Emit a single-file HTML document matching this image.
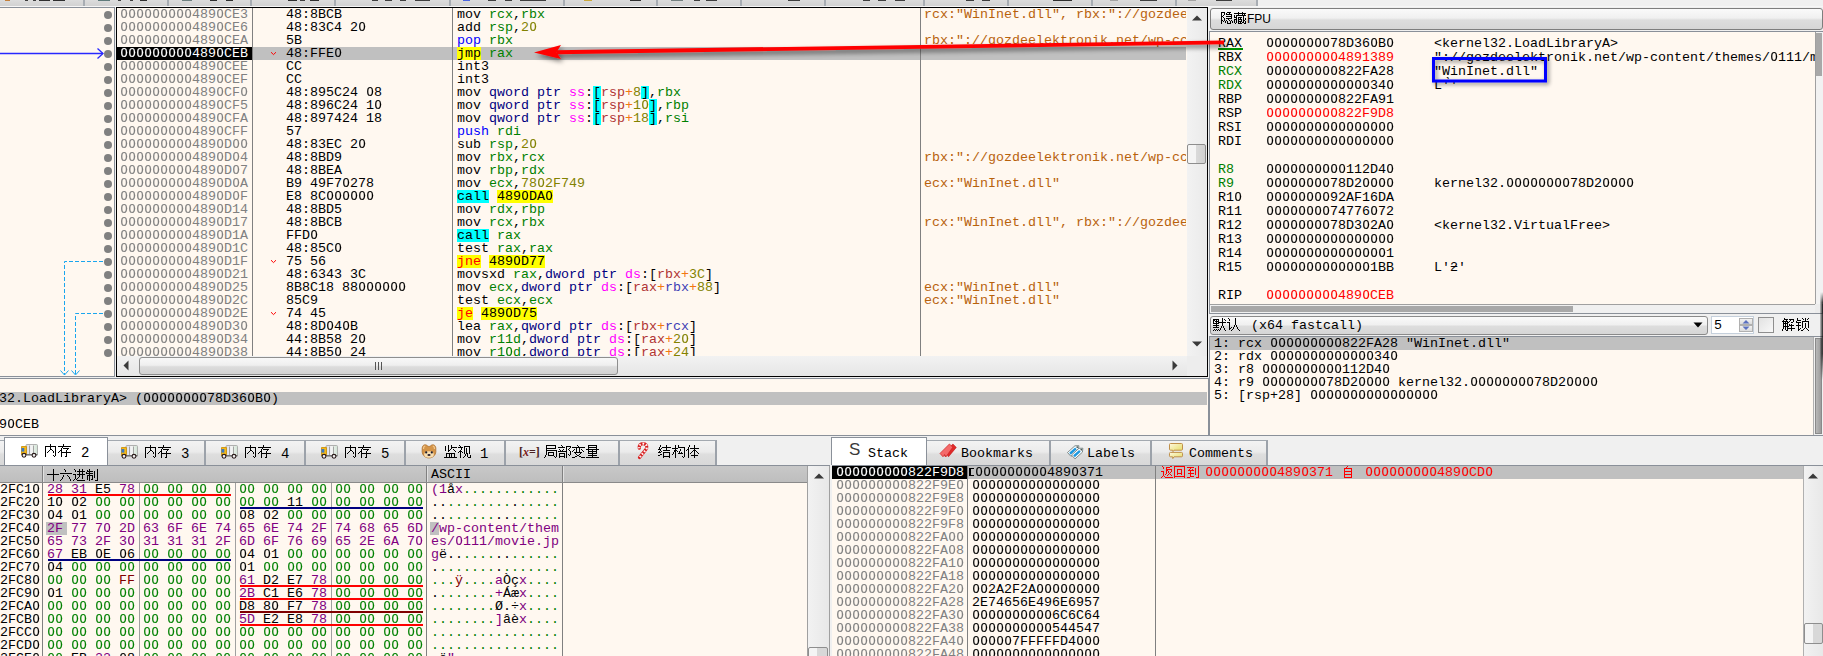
<!DOCTYPE html><html><head><meta charset="utf-8"><style>
*{margin:0;padding:0;box-sizing:border-box}
html,body{width:1823px;height:656px;overflow:hidden}
body{position:relative;background:#F0F0F0;font-family:"Liberation Mono",monospace;font-size:13.333px;line-height:13px;color:#000}
.a{position:absolute}
.t{position:absolute;white-space:pre;height:13px}
.z{display:inline-block;width:8px;transform:scaleX(.9);-webkit-text-stroke:0.15px currentColor;font-weight:normal}
</style></head><body><div class="a" style="left:0px;top:0px;width:1256px;height:6px;background:linear-gradient(#DCDCDC,#D2D2D2)"></div>
<div class="a" style="left:0px;top:6px;width:1823px;height:1px;background:#F6F6F6"></div>
<div class="a" style="left:83px;top:0px;width:2px;height:6px;background:#A8ADB3"></div>
<div class="a" style="left:167px;top:0px;width:2px;height:6px;background:#A8ADB3"></div>
<div class="a" style="left:250px;top:0px;width:2px;height:6px;background:#A8ADB3"></div>
<div class="a" style="left:334px;top:0px;width:2px;height:6px;background:#A8ADB3"></div>
<div class="a" style="left:449px;top:0px;width:2px;height:6px;background:#A8ADB3"></div>
<div class="a" style="left:563px;top:0px;width:2px;height:6px;background:#A8ADB3"></div>
<div class="a" style="left:656px;top:0px;width:2px;height:6px;background:#A8ADB3"></div>
<div class="a" style="left:740px;top:0px;width:2px;height:6px;background:#A8ADB3"></div>
<div class="a" style="left:824px;top:0px;width:2px;height:6px;background:#A8ADB3"></div>
<div class="a" style="left:923px;top:0px;width:2px;height:6px;background:#A8ADB3"></div>
<div class="a" style="left:1007px;top:0px;width:2px;height:6px;background:#A8ADB3"></div>
<div class="a" style="left:1091px;top:0px;width:2px;height:6px;background:#A8ADB3"></div>
<div class="a" style="left:1175px;top:0px;width:2px;height:6px;background:#A8ADB3"></div>
<div class="a" style="left:1256px;top:0px;width:2px;height:6px;background:#A8ADB3"></div>
<div class="a" style="left:5px;top:0px;width:5px;height:1px;background:#C07020;opacity:.85"></div>
<div class="a" style="left:25px;top:0px;width:3px;height:1px;background:#222;opacity:.85"></div>
<div class="a" style="left:33px;top:0px;width:3px;height:1px;background:#222;opacity:.85"></div>
<div class="a" style="left:39px;top:0px;width:11px;height:1px;background:#111;opacity:.85"></div>
<div class="a" style="left:53px;top:0px;width:12px;height:1px;background:#111;opacity:.85"></div>
<div class="a" style="left:98px;top:0px;width:12px;height:1px;background:#4A6A6A;opacity:.85"></div>
<div class="a" style="left:118px;top:0px;width:3px;height:1px;background:#222;opacity:.85"></div>
<div class="a" style="left:130px;top:0px;width:3px;height:1px;background:#222;opacity:.85"></div>
<div class="a" style="left:140px;top:0px;width:7px;height:1px;background:#111;opacity:.85"></div>
<div class="a" style="left:182px;top:0px;width:10px;height:1px;background:#5A7070;opacity:.85"></div>
<div class="a" style="left:210px;top:0px;width:7px;height:1px;background:#111;opacity:.85"></div>
<div class="a" style="left:226px;top:0px;width:7px;height:1px;background:#111;opacity:.85"></div>
<div class="a" style="left:288px;top:0px;width:9px;height:1px;background:#111;opacity:.85"></div>
<div class="a" style="left:300px;top:0px;width:5px;height:1px;background:#222;opacity:.85"></div>
<div class="a" style="left:310px;top:0px;width:9px;height:1px;background:#111;opacity:.85"></div>
<div class="a" style="left:372px;top:0px;width:6px;height:1px;background:#222;opacity:.85"></div>
<div class="a" style="left:385px;top:0px;width:7px;height:1px;background:#222;opacity:.85"></div>
<div class="a" style="left:400px;top:0px;width:6px;height:1px;background:#222;opacity:.85"></div>
<div class="a" style="left:415px;top:0px;width:15px;height:1px;background:#222;opacity:.85"></div>
<div class="a" style="left:463px;top:0px;width:7px;height:1px;background:#3050E0;opacity:.85"></div>
<div class="a" style="left:488px;top:0px;width:8px;height:1px;background:#222;opacity:.85"></div>
<div class="a" style="left:505px;top:0px;width:7px;height:1px;background:#222;opacity:.85"></div>
<div class="a" style="left:520px;top:0px;width:26px;height:1px;background:#222;opacity:.85"></div>
<div class="a" style="left:584px;top:0px;width:8px;height:1px;background:#C8A020;opacity:.85"></div>
<div class="a" style="left:630px;top:0px;width:11px;height:1px;background:#111;opacity:.85"></div>
<div class="a" style="left:671px;top:0px;width:12px;height:1px;background:#607070;opacity:.85"></div>
<div class="a" style="left:694px;top:0px;width:6px;height:1px;background:#222;opacity:.85"></div>
<div class="a" style="left:706px;top:0px;width:11px;height:1px;background:#222;opacity:.85"></div>
<div class="a" style="left:788px;top:0px;width:12px;height:1px;background:#222;opacity:.85"></div>
<div class="a" style="left:863px;top:0px;width:7px;height:1px;background:#222;opacity:.85"></div>
<div class="a" style="left:878px;top:0px;width:8px;height:1px;background:#222;opacity:.85"></div>
<div class="a" style="left:895px;top:0px;width:10px;height:1px;background:#222;opacity:.85"></div>
<div class="a" style="left:966px;top:0px;width:8px;height:1px;background:#222;opacity:.85"></div>
<div class="a" style="left:982px;top:0px;width:8px;height:1px;background:#222;opacity:.85"></div>
<div class="a" style="left:1053px;top:0px;width:19px;height:1px;background:#111;opacity:.85"></div>
<div class="a" style="left:1110px;top:0px;width:8px;height:1px;background:#999;opacity:.85"></div>
<div class="a" style="left:1140px;top:0px;width:17px;height:1px;background:#222;opacity:.85"></div>
<div class="a" style="left:1188px;top:0px;width:8px;height:1px;background:#999;opacity:.85"></div>
<div class="a" style="left:1216px;top:0px;width:16px;height:1px;background:#222;opacity:.85"></div>
<div class="a" style="left:0px;top:7px;width:115px;height:370px;background:#FFF8F0;border-top:1px solid #8A9099;border-right:1px solid #8A9099;border-bottom:1px solid #8A9099"></div>
<div class="a" style="left:116px;top:7px;width:1092px;height:370px;background:#FFF8F0;border:1px solid #000"></div>
<div class="a" style="left:104px;top:10.5px;width:8px;height:8px;border-radius:50%;background:#808080"></div>
<div class="a" style="left:104px;top:23.5px;width:8px;height:8px;border-radius:50%;background:#808080"></div>
<div class="a" style="left:104px;top:36.5px;width:8px;height:8px;border-radius:50%;background:#808080"></div>
<div class="a" style="left:104px;top:49.5px;width:8px;height:8px;border-radius:50%;background:#808080"></div>
<div class="a" style="left:104px;top:62.5px;width:8px;height:8px;border-radius:50%;background:#808080"></div>
<div class="a" style="left:104px;top:75.5px;width:8px;height:8px;border-radius:50%;background:#808080"></div>
<div class="a" style="left:104px;top:88.5px;width:8px;height:8px;border-radius:50%;background:#808080"></div>
<div class="a" style="left:104px;top:101.5px;width:8px;height:8px;border-radius:50%;background:#808080"></div>
<div class="a" style="left:104px;top:114.5px;width:8px;height:8px;border-radius:50%;background:#808080"></div>
<div class="a" style="left:104px;top:127.5px;width:8px;height:8px;border-radius:50%;background:#808080"></div>
<div class="a" style="left:104px;top:140.5px;width:8px;height:8px;border-radius:50%;background:#808080"></div>
<div class="a" style="left:104px;top:153.5px;width:8px;height:8px;border-radius:50%;background:#808080"></div>
<div class="a" style="left:104px;top:166.5px;width:8px;height:8px;border-radius:50%;background:#808080"></div>
<div class="a" style="left:104px;top:179.5px;width:8px;height:8px;border-radius:50%;background:#808080"></div>
<div class="a" style="left:104px;top:192.5px;width:8px;height:8px;border-radius:50%;background:#808080"></div>
<div class="a" style="left:104px;top:205.5px;width:8px;height:8px;border-radius:50%;background:#808080"></div>
<div class="a" style="left:104px;top:218.5px;width:8px;height:8px;border-radius:50%;background:#808080"></div>
<div class="a" style="left:104px;top:231.5px;width:8px;height:8px;border-radius:50%;background:#808080"></div>
<div class="a" style="left:104px;top:244.5px;width:8px;height:8px;border-radius:50%;background:#808080"></div>
<div class="a" style="left:104px;top:257.5px;width:8px;height:8px;border-radius:50%;background:#808080"></div>
<div class="a" style="left:104px;top:270.5px;width:8px;height:8px;border-radius:50%;background:#808080"></div>
<div class="a" style="left:104px;top:283.5px;width:8px;height:8px;border-radius:50%;background:#808080"></div>
<div class="a" style="left:104px;top:296.5px;width:8px;height:8px;border-radius:50%;background:#808080"></div>
<div class="a" style="left:104px;top:309.5px;width:8px;height:8px;border-radius:50%;background:#808080"></div>
<div class="a" style="left:104px;top:322.5px;width:8px;height:8px;border-radius:50%;background:#808080"></div>
<div class="a" style="left:104px;top:335.5px;width:8px;height:8px;border-radius:50%;background:#808080"></div>
<div class="a" style="left:104px;top:348.5px;width:8px;height:8px;border-radius:50%;background:#808080"></div>
<svg class="a" style="left:0;top:0" width="116" height="377">
<path d="M0 53.5H103" stroke="#2828FF" stroke-width="1.3" fill="none"/>
<path d="M97.5 48.5L103 53.5L97.5 58.5" stroke="#2828FF" stroke-width="1.3" fill="none"/>
<path d="M103 261.5H64.5V375" stroke="#1AA6EE" stroke-width="1" stroke-dasharray="4 2" fill="none"/>
<path d="M103 313.5H75.5V375" stroke="#1AA6EE" stroke-width="1" stroke-dasharray="4 2" fill="none"/>
<path d="M60.5 370.5L64.5 375L68.5 370.5M71.5 370.5L75.5 375L79.5 370.5" stroke="#1AA6EE" stroke-width="1" fill="none"/>
</svg>
<div class="a" style="left:117px;top:8px;width:1070px;height:348px;overflow:hidden">
<div class="a" style="left:0px;top:39px;width:1069px;height:13px;background:#C0C0C0"></div>
<div class="a" style="left:0px;top:39px;width:135px;height:13px;background:#000"></div>
<div class="a" style="left:135px;top:0px;width:1px;height:348px;background:#808080"></div>
<div class="a" style="left:335px;top:0px;width:1px;height:348px;background:#808080"></div>
<div class="a" style="left:803px;top:0px;width:1px;height:348px;background:#808080"></div>
<div class="t" style="left:3px;top:0px;"><span style="color:#808080;"><b class="z">O</b><b class="z">O</b><b class="z">O</b><b class="z">O</b><b class="z">O</b><b class="z">O</b><b class="z">O</b><b class="z">O</b><b class="z">O</b>489<b class="z">O</b>CE3</span></div>
<div class="t" style="left:169px;top:0px;"><span style="color:#000000;">48:8BCB</span></div>
<div class="t" style="left:340px;top:0px;"><span style="color:#000000;">mov</span> <span style="color:#008000;">rcx</span><span style="color:#000000;">,</span><span style="color:#008000;">rbx</span></div>
<div class="t" style="left:807px;top:0px;width:262px;overflow:hidden"><span style="color:#B8620C;">rcx:"WinInet.dll", rbx:"://gozdee</span></div>
<div class="t" style="left:3px;top:13px;"><span style="color:#808080;"><b class="z">O</b><b class="z">O</b><b class="z">O</b><b class="z">O</b><b class="z">O</b><b class="z">O</b><b class="z">O</b><b class="z">O</b><b class="z">O</b>489<b class="z">O</b>CE6</span></div>
<div class="t" style="left:169px;top:13px;"><span style="color:#000000;">48:83C4 2<b class="z">O</b></span></div>
<div class="t" style="left:340px;top:13px;"><span style="color:#000000;">add</span> <span style="color:#008000;">rsp</span><span style="color:#000000;">,</span><span style="color:#828200;">2<b class="z">O</b></span></div>
<div class="t" style="left:3px;top:26px;"><span style="color:#808080;"><b class="z">O</b><b class="z">O</b><b class="z">O</b><b class="z">O</b><b class="z">O</b><b class="z">O</b><b class="z">O</b><b class="z">O</b><b class="z">O</b>489<b class="z">O</b>CEA</span></div>
<div class="t" style="left:169px;top:26px;"><span style="color:#000000;">5B</span></div>
<div class="t" style="left:340px;top:26px;"><span style="color:#0000FF;">pop</span> <span style="color:#008000;">rbx</span></div>
<div class="t" style="left:807px;top:26px;width:262px;overflow:hidden"><span style="color:#B8620C;">rbx:"://gozdeelektronik.net/wp-cc</span></div>
<div class="t" style="left:3px;top:39px;"><span style="color:#FFFFFF;"><b class="z">O</b><b class="z">O</b><b class="z">O</b><b class="z">O</b><b class="z">O</b><b class="z">O</b><b class="z">O</b><b class="z">O</b><b class="z">O</b>489<b class="z">O</b>CEB</span></div>
<div class="t" style="left:169px;top:39px;"><span style="color:#000000;">48:FFE<b class="z">O</b></span></div>
<div class="t" style="left:340px;top:39px;"><span style="color:#000000;background:#FFFF00;display:inline-block;height:13px;vertical-align:top;">jmp</span> <span style="color:#008000;">rax</span></div>
<div class="t" style="left:3px;top:52px;"><span style="color:#808080;"><b class="z">O</b><b class="z">O</b><b class="z">O</b><b class="z">O</b><b class="z">O</b><b class="z">O</b><b class="z">O</b><b class="z">O</b><b class="z">O</b>489<b class="z">O</b>CEE</span></div>
<div class="t" style="left:169px;top:52px;"><span style="color:#000000;">CC</span></div>
<div class="t" style="left:340px;top:52px;"><span style="color:#000000;">int3</span></div>
<div class="t" style="left:3px;top:65px;"><span style="color:#808080;"><b class="z">O</b><b class="z">O</b><b class="z">O</b><b class="z">O</b><b class="z">O</b><b class="z">O</b><b class="z">O</b><b class="z">O</b><b class="z">O</b>489<b class="z">O</b>CEF</span></div>
<div class="t" style="left:169px;top:65px;"><span style="color:#000000;">CC</span></div>
<div class="t" style="left:340px;top:65px;"><span style="color:#000000;">int3</span></div>
<div class="t" style="left:3px;top:78px;"><span style="color:#808080;"><b class="z">O</b><b class="z">O</b><b class="z">O</b><b class="z">O</b><b class="z">O</b><b class="z">O</b><b class="z">O</b><b class="z">O</b><b class="z">O</b>489<b class="z">O</b>CF<b class="z">O</b></span></div>
<div class="t" style="left:169px;top:78px;"><span style="color:#000000;">48:895C24 <b class="z">O</b>8</span></div>
<div class="t" style="left:340px;top:78px;"><span style="color:#000000;">mov</span> <span style="color:#000080;">qword ptr</span> <span style="color:#FF00FF;">ss</span><span style="color:#000000;">:</span><span style="color:#000000;background:#00FFFF;display:inline-block;height:13px;vertical-align:top;">[</span><span style="color:#B03434;">rsp</span><span style="color:#F27711;">+</span><span style="color:#828200;">8</span><span style="color:#000000;background:#00FFFF;display:inline-block;height:13px;vertical-align:top;">]</span><span style="color:#000000;">,</span><span style="color:#008000;">rbx</span></div>
<div class="t" style="left:3px;top:91px;"><span style="color:#808080;"><b class="z">O</b><b class="z">O</b><b class="z">O</b><b class="z">O</b><b class="z">O</b><b class="z">O</b><b class="z">O</b><b class="z">O</b><b class="z">O</b>489<b class="z">O</b>CF5</span></div>
<div class="t" style="left:169px;top:91px;"><span style="color:#000000;">48:896C24 1<b class="z">O</b></span></div>
<div class="t" style="left:340px;top:91px;"><span style="color:#000000;">mov</span> <span style="color:#000080;">qword ptr</span> <span style="color:#FF00FF;">ss</span><span style="color:#000000;">:</span><span style="color:#000000;background:#00FFFF;display:inline-block;height:13px;vertical-align:top;">[</span><span style="color:#B03434;">rsp</span><span style="color:#F27711;">+</span><span style="color:#828200;">1<b class="z">O</b></span><span style="color:#000000;background:#00FFFF;display:inline-block;height:13px;vertical-align:top;">]</span><span style="color:#000000;">,</span><span style="color:#008000;">rbp</span></div>
<div class="t" style="left:3px;top:104px;"><span style="color:#808080;"><b class="z">O</b><b class="z">O</b><b class="z">O</b><b class="z">O</b><b class="z">O</b><b class="z">O</b><b class="z">O</b><b class="z">O</b><b class="z">O</b>489<b class="z">O</b>CFA</span></div>
<div class="t" style="left:169px;top:104px;"><span style="color:#000000;">48:897424 18</span></div>
<div class="t" style="left:340px;top:104px;"><span style="color:#000000;">mov</span> <span style="color:#000080;">qword ptr</span> <span style="color:#FF00FF;">ss</span><span style="color:#000000;">:</span><span style="color:#000000;background:#00FFFF;display:inline-block;height:13px;vertical-align:top;">[</span><span style="color:#B03434;">rsp</span><span style="color:#F27711;">+</span><span style="color:#828200;">18</span><span style="color:#000000;background:#00FFFF;display:inline-block;height:13px;vertical-align:top;">]</span><span style="color:#000000;">,</span><span style="color:#008000;">rsi</span></div>
<div class="t" style="left:3px;top:117px;"><span style="color:#808080;"><b class="z">O</b><b class="z">O</b><b class="z">O</b><b class="z">O</b><b class="z">O</b><b class="z">O</b><b class="z">O</b><b class="z">O</b><b class="z">O</b>489<b class="z">O</b>CFF</span></div>
<div class="t" style="left:169px;top:117px;"><span style="color:#000000;">57</span></div>
<div class="t" style="left:340px;top:117px;"><span style="color:#0000FF;">push</span> <span style="color:#008000;">rdi</span></div>
<div class="t" style="left:3px;top:130px;"><span style="color:#808080;"><b class="z">O</b><b class="z">O</b><b class="z">O</b><b class="z">O</b><b class="z">O</b><b class="z">O</b><b class="z">O</b><b class="z">O</b><b class="z">O</b>489<b class="z">O</b>D<b class="z">O</b><b class="z">O</b></span></div>
<div class="t" style="left:169px;top:130px;"><span style="color:#000000;">48:83EC 2<b class="z">O</b></span></div>
<div class="t" style="left:340px;top:130px;"><span style="color:#000000;">sub</span> <span style="color:#008000;">rsp</span><span style="color:#000000;">,</span><span style="color:#828200;">2<b class="z">O</b></span></div>
<div class="t" style="left:3px;top:143px;"><span style="color:#808080;"><b class="z">O</b><b class="z">O</b><b class="z">O</b><b class="z">O</b><b class="z">O</b><b class="z">O</b><b class="z">O</b><b class="z">O</b><b class="z">O</b>489<b class="z">O</b>D<b class="z">O</b>4</span></div>
<div class="t" style="left:169px;top:143px;"><span style="color:#000000;">48:8BD9</span></div>
<div class="t" style="left:340px;top:143px;"><span style="color:#000000;">mov</span> <span style="color:#008000;">rbx</span><span style="color:#000000;">,</span><span style="color:#008000;">rcx</span></div>
<div class="t" style="left:807px;top:143px;width:262px;overflow:hidden"><span style="color:#B8620C;">rbx:"://gozdeelektronik.net/wp-cc</span></div>
<div class="t" style="left:3px;top:156px;"><span style="color:#808080;"><b class="z">O</b><b class="z">O</b><b class="z">O</b><b class="z">O</b><b class="z">O</b><b class="z">O</b><b class="z">O</b><b class="z">O</b><b class="z">O</b>489<b class="z">O</b>D<b class="z">O</b>7</span></div>
<div class="t" style="left:169px;top:156px;"><span style="color:#000000;">48:8BEA</span></div>
<div class="t" style="left:340px;top:156px;"><span style="color:#000000;">mov</span> <span style="color:#008000;">rbp</span><span style="color:#000000;">,</span><span style="color:#008000;">rdx</span></div>
<div class="t" style="left:3px;top:169px;"><span style="color:#808080;"><b class="z">O</b><b class="z">O</b><b class="z">O</b><b class="z">O</b><b class="z">O</b><b class="z">O</b><b class="z">O</b><b class="z">O</b><b class="z">O</b>489<b class="z">O</b>D<b class="z">O</b>A</span></div>
<div class="t" style="left:169px;top:169px;"><span style="color:#000000;">B9 49F7<b class="z">O</b>278</span></div>
<div class="t" style="left:340px;top:169px;"><span style="color:#000000;">mov</span> <span style="color:#008000;">ecx</span><span style="color:#000000;">,</span><span style="color:#828200;">78<b class="z">O</b>2F749</span></div>
<div class="t" style="left:807px;top:169px;width:262px;overflow:hidden"><span style="color:#B8620C;">ecx:"WinInet.dll"</span></div>
<div class="t" style="left:3px;top:182px;"><span style="color:#808080;"><b class="z">O</b><b class="z">O</b><b class="z">O</b><b class="z">O</b><b class="z">O</b><b class="z">O</b><b class="z">O</b><b class="z">O</b><b class="z">O</b>489<b class="z">O</b>D<b class="z">O</b>F</span></div>
<div class="t" style="left:169px;top:182px;"><span style="color:#000000;">E8 8C<b class="z">O</b><b class="z">O</b><b class="z">O</b><b class="z">O</b><b class="z">O</b><b class="z">O</b></span></div>
<div class="t" style="left:340px;top:182px;"><span style="color:#000000;background:#00FFFF;display:inline-block;height:13px;vertical-align:top;">call</span> <span style="color:#000000;background:#FFFF00;display:inline-block;height:13px;vertical-align:top;">489<b class="z">O</b>DA<b class="z">O</b></span></div>
<div class="t" style="left:3px;top:195px;"><span style="color:#808080;"><b class="z">O</b><b class="z">O</b><b class="z">O</b><b class="z">O</b><b class="z">O</b><b class="z">O</b><b class="z">O</b><b class="z">O</b><b class="z">O</b>489<b class="z">O</b>D14</span></div>
<div class="t" style="left:169px;top:195px;"><span style="color:#000000;">48:8BD5</span></div>
<div class="t" style="left:340px;top:195px;"><span style="color:#000000;">mov</span> <span style="color:#008000;">rdx</span><span style="color:#000000;">,</span><span style="color:#008000;">rbp</span></div>
<div class="t" style="left:3px;top:208px;"><span style="color:#808080;"><b class="z">O</b><b class="z">O</b><b class="z">O</b><b class="z">O</b><b class="z">O</b><b class="z">O</b><b class="z">O</b><b class="z">O</b><b class="z">O</b>489<b class="z">O</b>D17</span></div>
<div class="t" style="left:169px;top:208px;"><span style="color:#000000;">48:8BCB</span></div>
<div class="t" style="left:340px;top:208px;"><span style="color:#000000;">mov</span> <span style="color:#008000;">rcx</span><span style="color:#000000;">,</span><span style="color:#008000;">rbx</span></div>
<div class="t" style="left:807px;top:208px;width:262px;overflow:hidden"><span style="color:#B8620C;">rcx:"WinInet.dll", rbx:"://gozdee</span></div>
<div class="t" style="left:3px;top:221px;"><span style="color:#808080;"><b class="z">O</b><b class="z">O</b><b class="z">O</b><b class="z">O</b><b class="z">O</b><b class="z">O</b><b class="z">O</b><b class="z">O</b><b class="z">O</b>489<b class="z">O</b>D1A</span></div>
<div class="t" style="left:169px;top:221px;"><span style="color:#000000;">FFD<b class="z">O</b></span></div>
<div class="t" style="left:340px;top:221px;"><span style="color:#000000;background:#00FFFF;display:inline-block;height:13px;vertical-align:top;">call</span> <span style="color:#008000;">rax</span></div>
<div class="t" style="left:3px;top:234px;"><span style="color:#808080;"><b class="z">O</b><b class="z">O</b><b class="z">O</b><b class="z">O</b><b class="z">O</b><b class="z">O</b><b class="z">O</b><b class="z">O</b><b class="z">O</b>489<b class="z">O</b>D1C</span></div>
<div class="t" style="left:169px;top:234px;"><span style="color:#000000;">48:85C<b class="z">O</b></span></div>
<div class="t" style="left:340px;top:234px;"><span style="color:#000000;">test</span> <span style="color:#008000;">rax</span><span style="color:#000000;">,</span><span style="color:#008000;">rax</span></div>
<div class="t" style="left:3px;top:247px;"><span style="color:#808080;"><b class="z">O</b><b class="z">O</b><b class="z">O</b><b class="z">O</b><b class="z">O</b><b class="z">O</b><b class="z">O</b><b class="z">O</b><b class="z">O</b>489<b class="z">O</b>D1F</span></div>
<div class="t" style="left:169px;top:247px;"><span style="color:#000000;">75 56</span></div>
<div class="t" style="left:340px;top:247px;"><span style="color:#FF0000;background:#FFFF00;display:inline-block;height:13px;vertical-align:top;">jne</span> <span style="color:#000000;background:#FFFF00;display:inline-block;height:13px;vertical-align:top;">489<b class="z">O</b>D77</span></div>
<div class="t" style="left:3px;top:260px;"><span style="color:#808080;"><b class="z">O</b><b class="z">O</b><b class="z">O</b><b class="z">O</b><b class="z">O</b><b class="z">O</b><b class="z">O</b><b class="z">O</b><b class="z">O</b>489<b class="z">O</b>D21</span></div>
<div class="t" style="left:169px;top:260px;"><span style="color:#000000;">48:6343 3C</span></div>
<div class="t" style="left:340px;top:260px;"><span style="color:#000000;">movsxd</span> <span style="color:#008000;">rax</span><span style="color:#000000;">,</span><span style="color:#000080;">dword ptr</span> <span style="color:#FF00FF;">ds</span><span style="color:#000000;">:</span><span style="color:#000000;">[</span><span style="color:#B03434;">rbx</span><span style="color:#F27711;">+</span><span style="color:#828200;">3C</span><span style="color:#000000;">]</span></div>
<div class="t" style="left:3px;top:273px;"><span style="color:#808080;"><b class="z">O</b><b class="z">O</b><b class="z">O</b><b class="z">O</b><b class="z">O</b><b class="z">O</b><b class="z">O</b><b class="z">O</b><b class="z">O</b>489<b class="z">O</b>D25</span></div>
<div class="t" style="left:169px;top:273px;"><span style="color:#000000;">8B8C18 88<b class="z">O</b><b class="z">O</b><b class="z">O</b><b class="z">O</b><b class="z">O</b><b class="z">O</b></span></div>
<div class="t" style="left:340px;top:273px;"><span style="color:#000000;">mov</span> <span style="color:#008000;">ecx</span><span style="color:#000000;">,</span><span style="color:#000080;">dword ptr</span> <span style="color:#FF00FF;">ds</span><span style="color:#000000;">:</span><span style="color:#000000;">[</span><span style="color:#B03434;">rax</span><span style="color:#F27711;">+</span><span style="color:#3F3FB5;">rbx</span><span style="color:#F27711;">+</span><span style="color:#828200;">88</span><span style="color:#000000;">]</span></div>
<div class="t" style="left:807px;top:273px;width:262px;overflow:hidden"><span style="color:#B8620C;">ecx:"WinInet.dll"</span></div>
<div class="t" style="left:3px;top:286px;"><span style="color:#808080;"><b class="z">O</b><b class="z">O</b><b class="z">O</b><b class="z">O</b><b class="z">O</b><b class="z">O</b><b class="z">O</b><b class="z">O</b><b class="z">O</b>489<b class="z">O</b>D2C</span></div>
<div class="t" style="left:169px;top:286px;"><span style="color:#000000;">85C9</span></div>
<div class="t" style="left:340px;top:286px;"><span style="color:#000000;">test</span> <span style="color:#008000;">ecx</span><span style="color:#000000;">,</span><span style="color:#008000;">ecx</span></div>
<div class="t" style="left:807px;top:286px;width:262px;overflow:hidden"><span style="color:#B8620C;">ecx:"WinInet.dll"</span></div>
<div class="t" style="left:3px;top:299px;"><span style="color:#808080;"><b class="z">O</b><b class="z">O</b><b class="z">O</b><b class="z">O</b><b class="z">O</b><b class="z">O</b><b class="z">O</b><b class="z">O</b><b class="z">O</b>489<b class="z">O</b>D2E</span></div>
<div class="t" style="left:169px;top:299px;"><span style="color:#000000;">74 45</span></div>
<div class="t" style="left:340px;top:299px;"><span style="color:#FF0000;background:#FFFF00;display:inline-block;height:13px;vertical-align:top;">je</span> <span style="color:#000000;background:#FFFF00;display:inline-block;height:13px;vertical-align:top;">489<b class="z">O</b>D75</span></div>
<div class="t" style="left:3px;top:312px;"><span style="color:#808080;"><b class="z">O</b><b class="z">O</b><b class="z">O</b><b class="z">O</b><b class="z">O</b><b class="z">O</b><b class="z">O</b><b class="z">O</b><b class="z">O</b>489<b class="z">O</b>D3<b class="z">O</b></span></div>
<div class="t" style="left:169px;top:312px;"><span style="color:#000000;">48:8D<b class="z">O</b>4<b class="z">O</b>B</span></div>
<div class="t" style="left:340px;top:312px;"><span style="color:#000000;">lea</span> <span style="color:#008000;">rax</span><span style="color:#000000;">,</span><span style="color:#000080;">qword ptr</span> <span style="color:#FF00FF;">ds</span><span style="color:#000000;">:</span><span style="color:#000000;">[</span><span style="color:#B03434;">rbx</span><span style="color:#F27711;">+</span><span style="color:#3F3FB5;">rcx</span><span style="color:#000000;">]</span></div>
<div class="t" style="left:3px;top:325px;"><span style="color:#808080;"><b class="z">O</b><b class="z">O</b><b class="z">O</b><b class="z">O</b><b class="z">O</b><b class="z">O</b><b class="z">O</b><b class="z">O</b><b class="z">O</b>489<b class="z">O</b>D34</span></div>
<div class="t" style="left:169px;top:325px;"><span style="color:#000000;">44:8B58 2<b class="z">O</b></span></div>
<div class="t" style="left:340px;top:325px;"><span style="color:#000000;">mov</span> <span style="color:#008000;">r11d</span><span style="color:#000000;">,</span><span style="color:#000080;">dword ptr</span> <span style="color:#FF00FF;">ds</span><span style="color:#000000;">:</span><span style="color:#000000;">[</span><span style="color:#B03434;">rax</span><span style="color:#F27711;">+</span><span style="color:#828200;">2<b class="z">O</b></span><span style="color:#000000;">]</span></div>
<div class="t" style="left:3px;top:338px;"><span style="color:#808080;"><b class="z">O</b><b class="z">O</b><b class="z">O</b><b class="z">O</b><b class="z">O</b><b class="z">O</b><b class="z">O</b><b class="z">O</b><b class="z">O</b>489<b class="z">O</b>D38</span></div>
<div class="t" style="left:169px;top:338px;"><span style="color:#000000;">44:8B5<b class="z">O</b> 24</span></div>
<div class="t" style="left:340px;top:338px;"><span style="color:#000000;">mov</span> <span style="color:#008000;">r1<b class="z">O</b>d</span><span style="color:#000000;">,</span><span style="color:#000080;">dword ptr</span> <span style="color:#FF00FF;">ds</span><span style="color:#000000;">:</span><span style="color:#000000;">[</span><span style="color:#B03434;">rax</span><span style="color:#F27711;">+</span><span style="color:#828200;">24</span><span style="color:#000000;">]</span></div>
</div>
<svg class="a" style="left:270px;top:51.0px" width="7" height="5"><path d="M1 1.2L3.5 3.6L6 1.2" stroke="#FF0000" stroke-width="1" fill="none"/></svg>
<svg class="a" style="left:270px;top:259.0px" width="7" height="5"><path d="M1 1.2L3.5 3.6L6 1.2" stroke="#FF0000" stroke-width="1" fill="none"/></svg>
<svg class="a" style="left:270px;top:311.0px" width="7" height="5"><path d="M1 1.2L3.5 3.6L6 1.2" stroke="#FF0000" stroke-width="1" fill="none"/></svg>
<div class="a" style="left:1187px;top:8px;width:20px;height:348px;background:linear-gradient(90deg,#F2F2F2,#EAEAEA)"></div>
<svg class="a" style="left:1191px;top:14px" width="12" height="8"><path d="M1 6.5L6 1.5L11 6.5Z" fill="#3A3A3A"/></svg>
<svg class="a" style="left:1191px;top:340px" width="12" height="8"><path d="M1 1.5L6 6.5L11 1.5Z" fill="#3A3A3A"/></svg>
<div class="a" style="left:1187px;top:144px;width:19px;height:20px;background:linear-gradient(90deg,#F4F4F4 0,#F4F4F4 45%,#DADADA 46%,#D0D0D0);border:1px solid #8E8E8E;border-radius:2px"></div>
<div class="a" style="left:117px;top:356px;width:1070px;height:20px;background:linear-gradient(#F2F2F2,#E6E6E6)"></div>
<div class="a" style="left:1187px;top:356px;width:20px;height:20px;background:#EDEDED"></div>
<svg class="a" style="left:121px;top:359px" width="10" height="14"><path d="M7.5 1.5L2.5 6.5L7.5 11.5Z" fill="#3A3A3A"/></svg>
<svg class="a" style="left:1170px;top:359px" width="10" height="14"><path d="M2.5 1.5L7.5 6.5L2.5 11.5Z" fill="#3A3A3A"/></svg>
<div class="a" style="left:139px;top:357px;width:479px;height:18px;background:linear-gradient(#F8F8F8 0,#EFEFEF 45%,#DCDCDC 55%,#D2D2D2);border:1px solid #8E8E8E;border-radius:3px"></div>
<div class="a" style="left:375px;top:362px;width:1px;height:8px;background:#555"></div>
<div class="a" style="left:378px;top:362px;width:1px;height:8px;background:#555"></div>
<div class="a" style="left:381px;top:362px;width:1px;height:8px;background:#555"></div>
<div class="a" style="left:1210px;top:8px;width:613px;height:22px;background:linear-gradient(#FAFAFA 0,#F0F0F0 45%,#DDDDDD 55%,#D6D6D6);border:1px solid #7E7E7E;border-radius:3px"></div>
<svg style="position:absolute;left:1221px;top:12px" width="25" height="12" viewBox="0 2 25 12" shape-rendering="crispEdges"><path fill="#000" d="M0 2h4v1h-4zM6 2h4v1h-4zM17 2h1v1h-1zM21 2h1v1h-1zM0 3h1v1h-1zM3 3h1v1h-1zM5 3h1v1h-1zM8 3h1v1h-1zM13 3h12v1h-12zM0 4h1v1h-1zM3 4h1v1h-1zM5 4h6v1h-6zM17 4h1v1h-1zM21 4h1v1h-1zM23 4h1v1h-1zM0 5h1v1h-1zM2 5h1v1h-1zM10 5h1v1h-1zM13 5h1v1h-1zM15 5h10v1h-10zM0 6h2v1h-2zM5 6h6v1h-6zM13 6h1v1h-1zM15 6h1v1h-1zM22 6h1v1h-1zM0 7h1v1h-1zM2 7h1v1h-1zM10 7h1v1h-1zM13 7h3v1h-3zM17 7h4v1h-4zM22 7h1v1h-1zM0 8h1v1h-1zM3 8h1v1h-1zM5 8h6v1h-6zM15 8h1v1h-1zM17 8h1v1h-1zM19 8h1v1h-1zM22 8h1v1h-1zM24 8h1v1h-1zM0 9h1v1h-1zM3 9h1v1h-1zM7 9h1v1h-1zM13 9h3v1h-3zM17 9h4v1h-4zM22 9h1v1h-1zM24 9h1v1h-1zM0 10h2v1h-2zM3 10h1v1h-1zM5 10h1v1h-1zM8 10h1v1h-1zM10 10h1v1h-1zM13 10h1v1h-1zM15 10h1v1h-1zM17 10h1v1h-1zM20 10h1v1h-1zM22 10h2v1h-2zM0 11h1v1h-1zM2 11h1v1h-1zM4 11h1v1h-1zM6 11h1v1h-1zM9 11h1v1h-1zM11 11h1v1h-1zM13 11h1v1h-1zM15 11h1v1h-1zM17 11h4v1h-4zM22 11h1v1h-1zM24 11h1v1h-1zM0 12h1v1h-1zM4 12h1v1h-1zM6 12h1v1h-1zM9 12h1v1h-1zM11 12h1v1h-1zM13 12h1v1h-1zM15 12h1v1h-1zM17 12h1v1h-1zM19 12h1v1h-1zM21 12h2v1h-2zM24 12h1v1h-1zM0 13h1v1h-1zM6 13h4v1h-4zM14 13h1v1h-1zM17 13h4v1h-4zM23 13h2v1h-2z"/></svg>
<div class="t" style="left:1247px;top:13px;font-family:'Liberation Sans',sans-serif;font-size:12px;line-height:13px">FPU</div>
<div class="a" style="left:1209px;top:31px;width:614px;height:283px;background:#FFF8F0;border:1px solid #8A9099"></div>
<div class="a" style="left:1815px;top:32px;width:8px;height:272px;background:#F2F2F2;border-left:1px solid #A0A0A0"></div>
<div class="a" style="left:1816px;top:33px;width:6px;height:43px;background:#A8A8A8"></div>
<div class="a" style="left:1210px;top:304px;width:605px;height:9px;background:#F0F0F0;border-top:1px solid #A0A0A0"></div>
<div class="a" style="left:1815px;top:304px;width:7px;height:9px;background:#ECECEC"></div>
<div class="a" style="left:1211px;top:306px;width:362px;height:6px;background:#A8A8A8"></div>
<div class="a" style="left:1210px;top:32px;width:605px;height:272px;overflow:hidden">
<div class="t" style="left:8px;top:5px;"><span style="color:#000;">RAX</span></div>
<div class="t" style="left:56px;top:5px;"><span style="color:#000;"><b class="z">O</b><b class="z">O</b><b class="z">O</b><b class="z">O</b><b class="z">O</b><b class="z">O</b><b class="z">O</b><b class="z">O</b>78D36<b class="z">O</b>B<b class="z">O</b></span></div>
<div class="t" style="left:224px;top:5px;"><span style="color:#000;">&lt;kernel32.LoadLibraryA&gt;</span></div>
<div class="t" style="left:8px;top:19px;"><span style="color:#000;">RBX</span></div>
<div class="t" style="left:56px;top:19px;"><span style="color:#FF0000;"><b class="z">O</b><b class="z">O</b><b class="z">O</b><b class="z">O</b><b class="z">O</b><b class="z">O</b><b class="z">O</b><b class="z">O</b><b class="z">O</b>4891389</span></div>
<div class="t" style="left:224px;top:19px;"><span style="color:#000;">"://gozdeelektronik.net/wp-content/themes/<b class="z">O</b>111/m</span></div>
<div class="t" style="left:8px;top:33px;"><span style="color:#008000;">RCX</span></div>
<div class="t" style="left:56px;top:33px;"><span style="color:#000;"><b class="z">O</b><b class="z">O</b><b class="z">O</b><b class="z">O</b><b class="z">O</b><b class="z">O</b><b class="z">O</b><b class="z">O</b><b class="z">O</b>822FA28</span></div>
<div class="t" style="left:224px;top:33px;"><span style="color:#000;">"WinInet.dll"</span></div>
<div class="t" style="left:8px;top:47px;"><span style="color:#008000;">RDX</span></div>
<div class="t" style="left:56px;top:47px;"><span style="color:#000;"><b class="z">O</b><b class="z">O</b><b class="z">O</b><b class="z">O</b><b class="z">O</b><b class="z">O</b><b class="z">O</b><b class="z">O</b><b class="z">O</b><b class="z">O</b><b class="z">O</b><b class="z">O</b><b class="z">O</b>34<b class="z">O</b></span></div>
<div class="t" style="left:224px;top:47px;"><span style="color:#000;">L'̀'</span></div>
<div class="t" style="left:8px;top:61px;"><span style="color:#000;">RBP</span></div>
<div class="t" style="left:56px;top:61px;"><span style="color:#000;"><b class="z">O</b><b class="z">O</b><b class="z">O</b><b class="z">O</b><b class="z">O</b><b class="z">O</b><b class="z">O</b><b class="z">O</b><b class="z">O</b>822FA91</span></div>
<div class="t" style="left:8px;top:75px;"><span style="color:#000;">RSP</span></div>
<div class="t" style="left:56px;top:75px;"><span style="color:#FF0000;"><b class="z">O</b><b class="z">O</b><b class="z">O</b><b class="z">O</b><b class="z">O</b><b class="z">O</b><b class="z">O</b><b class="z">O</b><b class="z">O</b>822F9D8</span></div>
<div class="t" style="left:8px;top:89px;"><span style="color:#000;">RSI</span></div>
<div class="t" style="left:56px;top:89px;"><span style="color:#000;"><b class="z">O</b><b class="z">O</b><b class="z">O</b><b class="z">O</b><b class="z">O</b><b class="z">O</b><b class="z">O</b><b class="z">O</b><b class="z">O</b><b class="z">O</b><b class="z">O</b><b class="z">O</b><b class="z">O</b><b class="z">O</b><b class="z">O</b><b class="z">O</b></span></div>
<div class="t" style="left:8px;top:103px;"><span style="color:#000;">RDI</span></div>
<div class="t" style="left:56px;top:103px;"><span style="color:#000;"><b class="z">O</b><b class="z">O</b><b class="z">O</b><b class="z">O</b><b class="z">O</b><b class="z">O</b><b class="z">O</b><b class="z">O</b><b class="z">O</b><b class="z">O</b><b class="z">O</b><b class="z">O</b><b class="z">O</b><b class="z">O</b><b class="z">O</b><b class="z">O</b></span></div>
<div class="t" style="left:8px;top:131px;"><span style="color:#008000;">R8</span></div>
<div class="t" style="left:56px;top:131px;"><span style="color:#000;"><b class="z">O</b><b class="z">O</b><b class="z">O</b><b class="z">O</b><b class="z">O</b><b class="z">O</b><b class="z">O</b><b class="z">O</b><b class="z">O</b><b class="z">O</b>112D4<b class="z">O</b></span></div>
<div class="t" style="left:8px;top:145px;"><span style="color:#008000;">R9</span></div>
<div class="t" style="left:56px;top:145px;"><span style="color:#000;"><b class="z">O</b><b class="z">O</b><b class="z">O</b><b class="z">O</b><b class="z">O</b><b class="z">O</b><b class="z">O</b><b class="z">O</b>78D2<b class="z">O</b><b class="z">O</b><b class="z">O</b><b class="z">O</b></span></div>
<div class="t" style="left:224px;top:145px;"><span style="color:#000;">kernel32.<b class="z">O</b><b class="z">O</b><b class="z">O</b><b class="z">O</b><b class="z">O</b><b class="z">O</b><b class="z">O</b><b class="z">O</b>78D2<b class="z">O</b><b class="z">O</b><b class="z">O</b><b class="z">O</b></span></div>
<div class="t" style="left:8px;top:159px;"><span style="color:#000;">R1<b class="z">O</b></span></div>
<div class="t" style="left:56px;top:159px;"><span style="color:#000;"><b class="z">O</b><b class="z">O</b><b class="z">O</b><b class="z">O</b><b class="z">O</b><b class="z">O</b><b class="z">O</b><b class="z">O</b>92AF16DA</span></div>
<div class="t" style="left:8px;top:173px;"><span style="color:#000;">R11</span></div>
<div class="t" style="left:56px;top:173px;"><span style="color:#000;"><b class="z">O</b><b class="z">O</b><b class="z">O</b><b class="z">O</b><b class="z">O</b><b class="z">O</b><b class="z">O</b><b class="z">O</b>74776<b class="z">O</b>72</span></div>
<div class="t" style="left:8px;top:187px;"><span style="color:#000;">R12</span></div>
<div class="t" style="left:56px;top:187px;"><span style="color:#000;"><b class="z">O</b><b class="z">O</b><b class="z">O</b><b class="z">O</b><b class="z">O</b><b class="z">O</b><b class="z">O</b><b class="z">O</b>78D3<b class="z">O</b>2A<b class="z">O</b></span></div>
<div class="t" style="left:224px;top:187px;"><span style="color:#000;">&lt;kernel32.VirtualFree&gt;</span></div>
<div class="t" style="left:8px;top:201px;"><span style="color:#000;">R13</span></div>
<div class="t" style="left:56px;top:201px;"><span style="color:#000;"><b class="z">O</b><b class="z">O</b><b class="z">O</b><b class="z">O</b><b class="z">O</b><b class="z">O</b><b class="z">O</b><b class="z">O</b><b class="z">O</b><b class="z">O</b><b class="z">O</b><b class="z">O</b><b class="z">O</b><b class="z">O</b><b class="z">O</b><b class="z">O</b></span></div>
<div class="t" style="left:8px;top:215px;"><span style="color:#000;">R14</span></div>
<div class="t" style="left:56px;top:215px;"><span style="color:#000;"><b class="z">O</b><b class="z">O</b><b class="z">O</b><b class="z">O</b><b class="z">O</b><b class="z">O</b><b class="z">O</b><b class="z">O</b><b class="z">O</b><b class="z">O</b><b class="z">O</b><b class="z">O</b><b class="z">O</b><b class="z">O</b><b class="z">O</b>1</span></div>
<div class="t" style="left:8px;top:229px;"><span style="color:#000;">R15</span></div>
<div class="t" style="left:56px;top:229px;"><span style="color:#000;"><b class="z">O</b><b class="z">O</b><b class="z">O</b><b class="z">O</b><b class="z">O</b><b class="z">O</b><b class="z">O</b><b class="z">O</b><b class="z">O</b><b class="z">O</b><b class="z">O</b><b class="z">O</b><b class="z">O</b>1BB</span></div>
<div class="t" style="left:224px;top:229px;"><span style="color:#000;">L'ƻ'</span></div>
<div class="t" style="left:8px;top:257px;"><span style="color:#000;">RIP</span></div>
<div class="t" style="left:56px;top:257px;"><span style="color:#FF0000;"><b class="z">O</b><b class="z">O</b><b class="z">O</b><b class="z">O</b><b class="z">O</b><b class="z">O</b><b class="z">O</b><b class="z">O</b><b class="z">O</b>489<b class="z">O</b>CEB</span></div>
</div>
<div class="a" style="left:1218px;top:48px;width:25px;height:2px;background:#009000"></div>
<div class="a" style="left:1209px;top:315px;width:614px;height:22px;background:#F0F0F0"></div>
<div class="a" style="left:1210px;top:316px;width:498px;height:19px;background:linear-gradient(#FAFAFA 0,#F0F0F0 45%,#DDDDDD 55%,#D6D6D6);border:1px solid #8A8A8A;border-radius:3px"></div>
<svg style="position:absolute;left:1213px;top:318px" width="27" height="13" viewBox="0 2 27 13" shape-rendering="crispEdges"><path fill="#000" d="M9 2h1v1h-1zM15 2h1v1h-1zM22 2h1v1h-1zM0 3h6v1h-6zM9 3h1v1h-1zM11 3h1v1h-1zM16 3h1v1h-1zM22 3h1v1h-1zM0 4h2v1h-2zM3 4h1v1h-1zM5 4h1v1h-1zM9 4h1v1h-1zM12 4h1v1h-1zM16 4h1v1h-1zM22 4h1v1h-1zM0 5h1v1h-1zM2 5h4v1h-4zM9 5h1v1h-1zM22 5h1v1h-1zM0 6h1v1h-1zM3 6h1v1h-1zM5 6h8v1h-8zM14 6h3v1h-3zM22 6h1v1h-1zM0 7h6v1h-6zM9 7h1v1h-1zM16 7h1v1h-1zM22 7h1v1h-1zM3 8h1v1h-1zM9 8h1v1h-1zM16 8h1v1h-1zM22 8h1v1h-1zM0 9h6v1h-6zM9 9h1v1h-1zM16 9h1v1h-1zM21 9h1v1h-1zM23 9h1v1h-1zM3 10h1v1h-1zM8 10h1v1h-1zM10 10h1v1h-1zM16 10h1v1h-1zM21 10h1v1h-1zM23 10h1v1h-1zM0 11h6v1h-6zM8 11h1v1h-1zM10 11h1v1h-1zM16 11h1v1h-1zM18 11h1v1h-1zM20 11h1v1h-1zM24 11h1v1h-1zM7 12h1v1h-1zM11 12h1v1h-1zM16 12h2v1h-2zM20 12h1v1h-1zM24 12h1v1h-1zM1 13h1v1h-1zM3 13h1v1h-1zM5 13h1v1h-1zM7 13h1v1h-1zM11 13h1v1h-1zM16 13h1v1h-1zM19 13h1v1h-1zM25 13h1v1h-1zM0 14h1v1h-1zM2 14h1v1h-1zM4 14h1v1h-1zM6 14h1v1h-1zM12 14h1v1h-1zM18 14h1v1h-1zM26 14h1v1h-1z"/></svg>
<div class="t" style="left:1251px;top:319px;"><span style="color:#000;">(x64 fastcall)</span></div>
<svg class="a" style="left:1693px;top:322px" width="10" height="6"><path d="M0.5 0.5H9.5L5 5.5Z" fill="#000"/></svg>
<div class="a" style="left:1711px;top:316px;width:43px;height:18px;background:#FFF;border:1px solid #C5D0DC"></div>
<div class="t" style="left:1714px;top:319px;"><span style="color:#000;">5</span></div>
<div class="a" style="left:1739px;top:318px;width:14px;height:7px;background:linear-gradient(#F2F2F2,#DCDCDC);border:1px solid #B0B0B0"></div>
<div class="a" style="left:1739px;top:325px;width:14px;height:7px;background:linear-gradient(#F2F2F2,#DCDCDC);border:1px solid #B0B0B0"></div>
<svg class="a" style="left:1741px;top:319px" width="10" height="12"><path d="M1.5 4.5L5 1L8.5 4.5Z M1.5 7.5L5 11L8.5 7.5Z" fill="#5A70C0"/></svg>
<div class="a" style="left:1758px;top:317px;width:16px;height:16px;background:linear-gradient(135deg,#E2E2E2,#F8F8F8);border:1px solid #8E8E8E"></div>
<svg style="position:absolute;left:1782px;top:318px" width="27" height="13" viewBox="0 2 27 13" shape-rendering="crispEdges"><path fill="#000" d="M2 2h1v1h-1zM15 2h1v1h-1zM20 2h1v1h-1zM23 2h1v1h-1zM26 2h1v1h-1zM2 3h4v1h-4zM7 3h5v1h-5zM15 3h1v1h-1zM21 3h1v1h-1zM23 3h1v1h-1zM25 3h1v1h-1zM1 4h1v1h-1zM4 4h1v1h-1zM8 4h1v1h-1zM11 4h1v1h-1zM15 4h4v1h-4zM23 4h1v1h-1zM0 5h6v1h-6zM7 5h1v1h-1zM11 5h1v1h-1zM14 5h1v1h-1zM20 5h7v1h-7zM1 6h1v1h-1zM3 6h1v1h-1zM5 6h2v1h-2zM9 6h2v1h-2zM14 6h5v1h-5zM20 6h1v1h-1zM26 6h1v1h-1zM1 7h5v1h-5zM16 7h1v1h-1zM20 7h1v1h-1zM23 7h1v1h-1zM26 7h1v1h-1zM1 8h1v1h-1zM3 8h1v1h-1zM5 8h1v1h-1zM7 8h1v1h-1zM9 8h1v1h-1zM16 8h1v1h-1zM20 8h1v1h-1zM23 8h1v1h-1zM26 8h1v1h-1zM1 9h1v1h-1zM3 9h1v1h-1zM5 9h1v1h-1zM7 9h5v1h-5zM14 9h5v1h-5zM20 9h1v1h-1zM23 9h1v1h-1zM26 9h1v1h-1zM1 10h6v1h-6zM9 10h1v1h-1zM16 10h1v1h-1zM20 10h1v1h-1zM23 10h1v1h-1zM26 10h1v1h-1zM1 11h1v1h-1zM3 11h1v1h-1zM5 11h1v1h-1zM9 11h1v1h-1zM16 11h1v1h-1zM20 11h1v1h-1zM23 11h1v1h-1zM26 11h1v1h-1zM1 12h1v1h-1zM3 12h1v1h-1zM5 12h8v1h-8zM16 12h1v1h-1zM18 12h1v1h-1zM22 12h1v1h-1zM24 12h1v1h-1zM0 13h1v1h-1zM3 13h1v1h-1zM5 13h1v1h-1zM9 13h1v1h-1zM16 13h2v1h-2zM21 13h1v1h-1zM25 13h1v1h-1zM0 14h1v1h-1zM4 14h2v1h-2zM9 14h1v1h-1zM16 14h1v1h-1zM19 14h2v1h-2zM26 14h1v1h-1z"/></svg>
<div class="a" style="left:1209px;top:336px;width:614px;height:100px;background:#FFF8F0;border:1px solid #8A9099"></div>
<div class="a" style="left:1210px;top:337px;width:603px;height:13px;background:#C0C0C0"></div>
<div class="a" style="left:1813px;top:337px;width:10px;height:98px;background:#F0F0F0;border-left:1px solid #B0B0B0"></div>
<div class="a" style="left:1815px;top:338px;width:7px;height:96px;background:linear-gradient(90deg,#B8B8B8,#9C9C9C);border:1px solid #8A8A8A"></div>
<div class="t" style="left:1214px;top:337px;"><span style="color:#000;">1: rcx <b class="z">O</b><b class="z">O</b><b class="z">O</b><b class="z">O</b><b class="z">O</b><b class="z">O</b><b class="z">O</b><b class="z">O</b><b class="z">O</b>822FA28 "WinInet.dll"</span></div>
<div class="t" style="left:1214px;top:350px;"><span style="color:#000;">2: rdx <b class="z">O</b><b class="z">O</b><b class="z">O</b><b class="z">O</b><b class="z">O</b><b class="z">O</b><b class="z">O</b><b class="z">O</b><b class="z">O</b><b class="z">O</b><b class="z">O</b><b class="z">O</b><b class="z">O</b>34<b class="z">O</b></span></div>
<div class="t" style="left:1214px;top:363px;"><span style="color:#000;">3: r8 <b class="z">O</b><b class="z">O</b><b class="z">O</b><b class="z">O</b><b class="z">O</b><b class="z">O</b><b class="z">O</b><b class="z">O</b><b class="z">O</b><b class="z">O</b>112D4<b class="z">O</b></span></div>
<div class="t" style="left:1214px;top:376px;"><span style="color:#000;">4: r9 <b class="z">O</b><b class="z">O</b><b class="z">O</b><b class="z">O</b><b class="z">O</b><b class="z">O</b><b class="z">O</b><b class="z">O</b>78D2<b class="z">O</b><b class="z">O</b><b class="z">O</b><b class="z">O</b> kernel32.<b class="z">O</b><b class="z">O</b><b class="z">O</b><b class="z">O</b><b class="z">O</b><b class="z">O</b><b class="z">O</b><b class="z">O</b>78D2<b class="z">O</b><b class="z">O</b><b class="z">O</b><b class="z">O</b></span></div>
<div class="t" style="left:1214px;top:389px;"><span style="color:#000;">5: [rsp+28] <b class="z">O</b><b class="z">O</b><b class="z">O</b><b class="z">O</b><b class="z">O</b><b class="z">O</b><b class="z">O</b><b class="z">O</b><b class="z">O</b><b class="z">O</b><b class="z">O</b><b class="z">O</b><b class="z">O</b><b class="z">O</b><b class="z">O</b><b class="z">O</b></span></div>
<div class="a" style="left:0px;top:378px;width:1209px;height:58px;background:#FFF8F0;border-top:1px solid #8A9099;border-right:1px solid #8A9099;border-bottom:1px solid #8A9099"></div>
<div class="a" style="left:0px;top:392px;width:1207px;height:13px;background:#C0C0C0"></div>
<div class="t" style="left:-1px;top:392px;"><span style="color:#000;">32.LoadLibraryA&gt; (<b class="z">O</b><b class="z">O</b><b class="z">O</b><b class="z">O</b><b class="z">O</b><b class="z">O</b><b class="z">O</b><b class="z">O</b>78D36<b class="z">O</b>B<b class="z">O</b>)</span></div>
<div class="t" style="left:-1px;top:418px;"><span style="color:#000;">9<b class="z">O</b>CEB</span></div>
<div class="a" style="left:0px;top:436px;width:830px;height:30px;background:#F0F0F0"></div>
<div class="a" style="left:0px;top:465px;width:830px;height:1px;background:#8A9099"></div>
<div class="a" style="left:0px;top:440px;width:4px;height:25px;background:linear-gradient(#F3F3F3 0,#EBEBEB 45%,#DEDEDE 55%,#D8D8D8);border-top:1px solid #A3A9B0"></div>
<div class="a" style="left:107px;top:440px;width:99px;height:25px;background:linear-gradient(#F3F3F3 0,#EBEBEB 45%,#DEDEDE 55%,#D8D8D8);border-top:1px solid #A3A9B0;border-right:2px solid #9CA2AA"></div>
<div class="a" style="left:206px;top:440px;width:100px;height:25px;background:linear-gradient(#F3F3F3 0,#EBEBEB 45%,#DEDEDE 55%,#D8D8D8);border-top:1px solid #A3A9B0;border-right:2px solid #9CA2AA"></div>
<div class="a" style="left:306px;top:440px;width:100px;height:25px;background:linear-gradient(#F3F3F3 0,#EBEBEB 45%,#DEDEDE 55%,#D8D8D8);border-top:1px solid #A3A9B0;border-right:2px solid #9CA2AA"></div>
<div class="a" style="left:406px;top:440px;width:100px;height:25px;background:linear-gradient(#F3F3F3 0,#EBEBEB 45%,#DEDEDE 55%,#D8D8D8);border-top:1px solid #A3A9B0;border-right:2px solid #9CA2AA"></div>
<div class="a" style="left:506px;top:440px;width:114px;height:25px;background:linear-gradient(#F3F3F3 0,#EBEBEB 45%,#DEDEDE 55%,#D8D8D8);border-top:1px solid #A3A9B0;border-right:2px solid #9CA2AA"></div>
<div class="a" style="left:620px;top:440px;width:97px;height:25px;background:linear-gradient(#F3F3F3 0,#EBEBEB 45%,#DEDEDE 55%,#D8D8D8);border-top:1px solid #A3A9B0;border-right:2px solid #9CA2AA"></div>
<div class="a" style="left:4px;top:437px;width:104px;height:28px;background:#FFFFFF;border:1px solid #8A9099;border-bottom:none"></div>
<svg class="a" style="left:20px;top:444px" width="18" height="14" viewBox="0 0 18 14">
<defs><linearGradient id="tg" x1="0" x2="1"><stop offset="0" stop-color="#D8DCE8"/><stop offset=".5" stop-color="#F4F4F4"/><stop offset="1" stop-color="#D0E4D4"/></linearGradient></defs>
<rect x="6" y="0.5" width="11.5" height="10.5" rx="1" fill="url(#tg)" stroke="#A8A8A8" stroke-width="0.9"/>
<path d="M9.5 1.5V10M13.5 1.5V10" stroke="#9A9A9A" stroke-width="0.9"/>
<path d="M1.5 2.5H6.5V10.5H1.5Z" fill="#F4B818" stroke="#C88A00" stroke-width="0.8"/>
<rect x="1.5" y="4" width="2.8" height="3.6" fill="#3A78C0"/>
<path d="M1.5 10.8H17.5" stroke="#505050" stroke-width="1"/>
<circle cx="4" cy="11.3" r="1.9" fill="#F0F0F0" stroke="#2A1A1A" stroke-width="1.1"/><circle cx="14" cy="11.3" r="1.9" fill="#F0F0F0" stroke="#2A1A1A" stroke-width="1.1"/>
</svg>
<svg style="position:absolute;left:45px;top:444px" width="26" height="13" viewBox="1 2 26 13" shape-rendering="crispEdges"><path fill="#000" d="M6 2h1v1h-1zM19 2h1v1h-1zM6 3h1v1h-1zM19 3h1v1h-1zM1 4h11v1h-11zM14 4h13v1h-13zM1 5h1v1h-1zM6 5h1v1h-1zM11 5h1v1h-1zM18 5h1v1h-1zM1 6h1v1h-1zM6 6h1v1h-1zM11 6h1v1h-1zM17 6h1v1h-1zM19 6h6v1h-6zM1 7h1v1h-1zM6 7h2v1h-2zM11 7h1v1h-1zM17 7h1v1h-1zM23 7h1v1h-1zM1 8h1v1h-1zM5 8h1v1h-1zM8 8h1v1h-1zM11 8h1v1h-1zM16 8h2v1h-2zM22 8h1v1h-1zM1 9h1v1h-1zM4 9h1v1h-1zM9 9h1v1h-1zM11 9h1v1h-1zM15 9h1v1h-1zM17 9h1v1h-1zM22 9h1v1h-1zM1 10h1v1h-1zM3 10h1v1h-1zM9 10h1v1h-1zM11 10h1v1h-1zM14 10h1v1h-1zM17 10h10v1h-10zM1 11h1v1h-1zM11 11h1v1h-1zM17 11h1v1h-1zM22 11h1v1h-1zM1 12h1v1h-1zM11 12h1v1h-1zM17 12h1v1h-1zM22 12h1v1h-1zM1 13h1v1h-1zM9 13h1v1h-1zM11 13h1v1h-1zM17 13h1v1h-1zM22 13h1v1h-1zM1 14h1v1h-1zM10 14h1v1h-1zM17 14h1v1h-1zM21 14h2v1h-2z"/></svg>
<div class="t" style="left:81px;top:447px;font-size:14px"><span style="color:#000;">2</span></div>
<svg class="a" style="left:120px;top:445px" width="18" height="14" viewBox="0 0 18 14">
<defs><linearGradient id="tg" x1="0" x2="1"><stop offset="0" stop-color="#D8DCE8"/><stop offset=".5" stop-color="#F4F4F4"/><stop offset="1" stop-color="#D0E4D4"/></linearGradient></defs>
<rect x="6" y="0.5" width="11.5" height="10.5" rx="1" fill="url(#tg)" stroke="#A8A8A8" stroke-width="0.9"/>
<path d="M9.5 1.5V10M13.5 1.5V10" stroke="#9A9A9A" stroke-width="0.9"/>
<path d="M1.5 2.5H6.5V10.5H1.5Z" fill="#F4B818" stroke="#C88A00" stroke-width="0.8"/>
<rect x="1.5" y="4" width="2.8" height="3.6" fill="#3A78C0"/>
<path d="M1.5 10.8H17.5" stroke="#505050" stroke-width="1"/>
<circle cx="4" cy="11.3" r="1.9" fill="#F0F0F0" stroke="#2A1A1A" stroke-width="1.1"/><circle cx="14" cy="11.3" r="1.9" fill="#F0F0F0" stroke="#2A1A1A" stroke-width="1.1"/>
</svg>
<svg style="position:absolute;left:145px;top:445px" width="26" height="13" viewBox="1 2 26 13" shape-rendering="crispEdges"><path fill="#000" d="M6 2h1v1h-1zM19 2h1v1h-1zM6 3h1v1h-1zM19 3h1v1h-1zM1 4h11v1h-11zM14 4h13v1h-13zM1 5h1v1h-1zM6 5h1v1h-1zM11 5h1v1h-1zM18 5h1v1h-1zM1 6h1v1h-1zM6 6h1v1h-1zM11 6h1v1h-1zM17 6h1v1h-1zM19 6h6v1h-6zM1 7h1v1h-1zM6 7h2v1h-2zM11 7h1v1h-1zM17 7h1v1h-1zM23 7h1v1h-1zM1 8h1v1h-1zM5 8h1v1h-1zM8 8h1v1h-1zM11 8h1v1h-1zM16 8h2v1h-2zM22 8h1v1h-1zM1 9h1v1h-1zM4 9h1v1h-1zM9 9h1v1h-1zM11 9h1v1h-1zM15 9h1v1h-1zM17 9h1v1h-1zM22 9h1v1h-1zM1 10h1v1h-1zM3 10h1v1h-1zM9 10h1v1h-1zM11 10h1v1h-1zM14 10h1v1h-1zM17 10h10v1h-10zM1 11h1v1h-1zM11 11h1v1h-1zM17 11h1v1h-1zM22 11h1v1h-1zM1 12h1v1h-1zM11 12h1v1h-1zM17 12h1v1h-1zM22 12h1v1h-1zM1 13h1v1h-1zM9 13h1v1h-1zM11 13h1v1h-1zM17 13h1v1h-1zM22 13h1v1h-1zM1 14h1v1h-1zM10 14h1v1h-1zM17 14h1v1h-1zM21 14h2v1h-2z"/></svg>
<div class="t" style="left:181px;top:448px;font-size:14px"><span style="color:#000;">3</span></div>
<svg class="a" style="left:220px;top:445px" width="18" height="14" viewBox="0 0 18 14">
<defs><linearGradient id="tg" x1="0" x2="1"><stop offset="0" stop-color="#D8DCE8"/><stop offset=".5" stop-color="#F4F4F4"/><stop offset="1" stop-color="#D0E4D4"/></linearGradient></defs>
<rect x="6" y="0.5" width="11.5" height="10.5" rx="1" fill="url(#tg)" stroke="#A8A8A8" stroke-width="0.9"/>
<path d="M9.5 1.5V10M13.5 1.5V10" stroke="#9A9A9A" stroke-width="0.9"/>
<path d="M1.5 2.5H6.5V10.5H1.5Z" fill="#F4B818" stroke="#C88A00" stroke-width="0.8"/>
<rect x="1.5" y="4" width="2.8" height="3.6" fill="#3A78C0"/>
<path d="M1.5 10.8H17.5" stroke="#505050" stroke-width="1"/>
<circle cx="4" cy="11.3" r="1.9" fill="#F0F0F0" stroke="#2A1A1A" stroke-width="1.1"/><circle cx="14" cy="11.3" r="1.9" fill="#F0F0F0" stroke="#2A1A1A" stroke-width="1.1"/>
</svg>
<svg style="position:absolute;left:245px;top:445px" width="26" height="13" viewBox="1 2 26 13" shape-rendering="crispEdges"><path fill="#000" d="M6 2h1v1h-1zM19 2h1v1h-1zM6 3h1v1h-1zM19 3h1v1h-1zM1 4h11v1h-11zM14 4h13v1h-13zM1 5h1v1h-1zM6 5h1v1h-1zM11 5h1v1h-1zM18 5h1v1h-1zM1 6h1v1h-1zM6 6h1v1h-1zM11 6h1v1h-1zM17 6h1v1h-1zM19 6h6v1h-6zM1 7h1v1h-1zM6 7h2v1h-2zM11 7h1v1h-1zM17 7h1v1h-1zM23 7h1v1h-1zM1 8h1v1h-1zM5 8h1v1h-1zM8 8h1v1h-1zM11 8h1v1h-1zM16 8h2v1h-2zM22 8h1v1h-1zM1 9h1v1h-1zM4 9h1v1h-1zM9 9h1v1h-1zM11 9h1v1h-1zM15 9h1v1h-1zM17 9h1v1h-1zM22 9h1v1h-1zM1 10h1v1h-1zM3 10h1v1h-1zM9 10h1v1h-1zM11 10h1v1h-1zM14 10h1v1h-1zM17 10h10v1h-10zM1 11h1v1h-1zM11 11h1v1h-1zM17 11h1v1h-1zM22 11h1v1h-1zM1 12h1v1h-1zM11 12h1v1h-1zM17 12h1v1h-1zM22 12h1v1h-1zM1 13h1v1h-1zM9 13h1v1h-1zM11 13h1v1h-1zM17 13h1v1h-1zM22 13h1v1h-1zM1 14h1v1h-1zM10 14h1v1h-1zM17 14h1v1h-1zM21 14h2v1h-2z"/></svg>
<div class="t" style="left:281px;top:448px;font-size:14px"><span style="color:#000;">4</span></div>
<svg class="a" style="left:320px;top:445px" width="18" height="14" viewBox="0 0 18 14">
<defs><linearGradient id="tg" x1="0" x2="1"><stop offset="0" stop-color="#D8DCE8"/><stop offset=".5" stop-color="#F4F4F4"/><stop offset="1" stop-color="#D0E4D4"/></linearGradient></defs>
<rect x="6" y="0.5" width="11.5" height="10.5" rx="1" fill="url(#tg)" stroke="#A8A8A8" stroke-width="0.9"/>
<path d="M9.5 1.5V10M13.5 1.5V10" stroke="#9A9A9A" stroke-width="0.9"/>
<path d="M1.5 2.5H6.5V10.5H1.5Z" fill="#F4B818" stroke="#C88A00" stroke-width="0.8"/>
<rect x="1.5" y="4" width="2.8" height="3.6" fill="#3A78C0"/>
<path d="M1.5 10.8H17.5" stroke="#505050" stroke-width="1"/>
<circle cx="4" cy="11.3" r="1.9" fill="#F0F0F0" stroke="#2A1A1A" stroke-width="1.1"/><circle cx="14" cy="11.3" r="1.9" fill="#F0F0F0" stroke="#2A1A1A" stroke-width="1.1"/>
</svg>
<svg style="position:absolute;left:345px;top:445px" width="26" height="13" viewBox="1 2 26 13" shape-rendering="crispEdges"><path fill="#000" d="M6 2h1v1h-1zM19 2h1v1h-1zM6 3h1v1h-1zM19 3h1v1h-1zM1 4h11v1h-11zM14 4h13v1h-13zM1 5h1v1h-1zM6 5h1v1h-1zM11 5h1v1h-1zM18 5h1v1h-1zM1 6h1v1h-1zM6 6h1v1h-1zM11 6h1v1h-1zM17 6h1v1h-1zM19 6h6v1h-6zM1 7h1v1h-1zM6 7h2v1h-2zM11 7h1v1h-1zM17 7h1v1h-1zM23 7h1v1h-1zM1 8h1v1h-1zM5 8h1v1h-1zM8 8h1v1h-1zM11 8h1v1h-1zM16 8h2v1h-2zM22 8h1v1h-1zM1 9h1v1h-1zM4 9h1v1h-1zM9 9h1v1h-1zM11 9h1v1h-1zM15 9h1v1h-1zM17 9h1v1h-1zM22 9h1v1h-1zM1 10h1v1h-1zM3 10h1v1h-1zM9 10h1v1h-1zM11 10h1v1h-1zM14 10h1v1h-1zM17 10h10v1h-10zM1 11h1v1h-1zM11 11h1v1h-1zM17 11h1v1h-1zM22 11h1v1h-1zM1 12h1v1h-1zM11 12h1v1h-1zM17 12h1v1h-1zM22 12h1v1h-1zM1 13h1v1h-1zM9 13h1v1h-1zM11 13h1v1h-1zM17 13h1v1h-1zM22 13h1v1h-1zM1 14h1v1h-1zM10 14h1v1h-1zM17 14h1v1h-1zM21 14h2v1h-2z"/></svg>
<div class="t" style="left:381px;top:448px;font-size:14px"><span style="color:#000;">5</span></div>
<svg class="a" style="left:421px;top:444px" width="16" height="15" viewBox="0 0 16 15">
<path d="M1.2 6C0.8 3 2 0.5 4.5 0.8C6 1 6.8 2.5 8 2.5C9.2 2.5 10 1 11.5 0.8C14 0.5 15.2 3 14.8 6C15.5 10 12.5 14 8 14C3.5 14 0.5 10 1.2 6Z" fill="#D49448" stroke="#A86A28" stroke-width="0.7"/>
<path d="M2.5 5C2.5 3 3.2 2 4.3 2M13.5 5C13.5 3 12.8 2 11.7 2" stroke="#F2C890" stroke-width="1.2" fill="none"/>
<ellipse cx="8" cy="10.5" rx="4.8" ry="3.2" fill="#F6DEB2"/>
<circle cx="5.2" cy="8.4" r="1.1" fill="#1A1A2A"/><circle cx="10.8" cy="8.4" r="1.1" fill="#1A1A2A"/>
<ellipse cx="8" cy="11" rx="1.6" ry="1.1" fill="#2A2030"/>
</svg>
<svg style="position:absolute;left:444px;top:445px" width="27" height="13" viewBox="0 2 27 13" shape-rendering="crispEdges"><path fill="#000" d="M4 2h1v1h-1zM7 2h1v1h-1zM15 2h1v1h-1zM1 3h1v1h-1zM4 3h1v1h-1zM7 3h1v1h-1zM16 3h1v1h-1zM20 3h6v1h-6zM1 4h1v1h-1zM4 4h1v1h-1zM7 4h6v1h-6zM14 4h5v1h-5zM20 4h1v1h-1zM25 4h1v1h-1zM1 5h1v1h-1zM4 5h1v1h-1zM7 5h1v1h-1zM17 5h1v1h-1zM20 5h1v1h-1zM22 5h1v1h-1zM25 5h1v1h-1zM1 6h1v1h-1zM4 6h1v1h-1zM6 6h1v1h-1zM9 6h1v1h-1zM17 6h1v1h-1zM20 6h1v1h-1zM22 6h1v1h-1zM25 6h1v1h-1zM1 7h1v1h-1zM4 7h2v1h-2zM10 7h1v1h-1zM16 7h1v1h-1zM20 7h1v1h-1zM22 7h1v1h-1zM25 7h1v1h-1zM4 8h1v1h-1zM11 8h1v1h-1zM15 8h3v1h-3zM20 8h1v1h-1zM22 8h1v1h-1zM25 8h1v1h-1zM14 9h1v1h-1zM16 9h1v1h-1zM18 9h1v1h-1zM20 9h1v1h-1zM22 9h1v1h-1zM25 9h1v1h-1zM2 10h9v1h-9zM16 10h1v1h-1zM20 10h1v1h-1zM22 10h2v1h-2zM25 10h1v1h-1zM2 11h1v1h-1zM5 11h1v1h-1zM7 11h1v1h-1zM10 11h1v1h-1zM16 11h1v1h-1zM21 11h1v1h-1zM23 11h1v1h-1zM2 12h1v1h-1zM5 12h1v1h-1zM7 12h1v1h-1zM10 12h1v1h-1zM16 12h1v1h-1zM21 12h1v1h-1zM23 12h1v1h-1zM26 12h1v1h-1zM2 13h1v1h-1zM5 13h1v1h-1zM7 13h1v1h-1zM10 13h1v1h-1zM16 13h1v1h-1zM20 13h1v1h-1zM23 13h1v1h-1zM26 13h1v1h-1zM0 14h13v1h-13zM16 14h1v1h-1zM19 14h1v1h-1zM24 14h3v1h-3z"/></svg>
<div class="t" style="left:480px;top:448px;font-size:14px"><span style="color:#000;">1</span></div>
<div class="t" style="left:519px;top:446px;font-family:'Liberation Serif',serif;font-size:12px;color:#4A2020;font-weight:bold">[<i style="color:#7A1A1A">x</i>=]</div>
<svg style="position:absolute;left:544px;top:445px" width="55" height="13" viewBox="0 2 55 13" shape-rendering="crispEdges"><path fill="#000" d="M2 2h10v1h-10zM17 2h1v1h-1zM33 2h1v1h-1zM44 2h9v1h-9zM2 3h1v1h-1zM11 3h1v1h-1zM18 3h1v1h-1zM22 3h5v1h-5zM34 3h1v1h-1zM44 3h1v1h-1zM52 3h1v1h-1zM2 4h1v1h-1zM11 4h1v1h-1zM14 4h7v1h-7zM22 4h1v1h-1zM26 4h1v1h-1zM28 4h13v1h-13zM44 4h9v1h-9zM2 5h10v1h-10zM22 5h1v1h-1zM25 5h1v1h-1zM32 5h1v1h-1zM35 5h1v1h-1zM44 5h1v1h-1zM52 5h1v1h-1zM2 6h1v1h-1zM15 6h1v1h-1zM19 6h1v1h-1zM22 6h1v1h-1zM24 6h1v1h-1zM30 6h1v1h-1zM32 6h1v1h-1zM35 6h1v1h-1zM37 6h1v1h-1zM42 6h13v1h-13zM2 7h11v1h-11zM16 7h1v1h-1zM18 7h1v1h-1zM22 7h1v1h-1zM25 7h1v1h-1zM29 7h1v1h-1zM32 7h1v1h-1zM35 7h1v1h-1zM38 7h1v1h-1zM44 7h1v1h-1zM48 7h1v1h-1zM52 7h1v1h-1zM2 8h1v1h-1zM12 8h1v1h-1zM14 8h9v1h-9zM26 8h1v1h-1zM28 8h1v1h-1zM32 8h1v1h-1zM35 8h1v1h-1zM39 8h1v1h-1zM44 8h9v1h-9zM2 9h1v1h-1zM4 9h6v1h-6zM12 9h1v1h-1zM22 9h1v1h-1zM26 9h1v1h-1zM30 9h8v1h-8zM44 9h1v1h-1zM48 9h1v1h-1zM52 9h1v1h-1zM2 10h1v1h-1zM4 10h1v1h-1zM9 10h1v1h-1zM12 10h1v1h-1zM15 10h6v1h-6zM22 10h1v1h-1zM26 10h1v1h-1zM31 10h1v1h-1zM36 10h1v1h-1zM44 10h9v1h-9zM2 11h1v1h-1zM4 11h1v1h-1zM9 11h1v1h-1zM12 11h1v1h-1zM15 11h1v1h-1zM20 11h1v1h-1zM22 11h1v1h-1zM24 11h1v1h-1zM26 11h1v1h-1zM32 11h1v1h-1zM35 11h1v1h-1zM48 11h1v1h-1zM1 12h1v1h-1zM4 12h6v1h-6zM12 12h1v1h-1zM15 12h1v1h-1zM20 12h1v1h-1zM22 12h1v1h-1zM25 12h1v1h-1zM33 12h2v1h-2zM44 12h9v1h-9zM1 13h1v1h-1zM10 13h1v1h-1zM12 13h1v1h-1zM15 13h6v1h-6zM22 13h1v1h-1zM31 13h2v1h-2zM35 13h2v1h-2zM48 13h1v1h-1zM0 14h1v1h-1zM11 14h1v1h-1zM15 14h1v1h-1zM20 14h1v1h-1zM22 14h1v1h-1zM28 14h3v1h-3zM37 14h4v1h-4zM42 14h13v1h-13z"/></svg>
<svg class="a" style="left:636px;top:442px" width="14" height="18" viewBox="0 0 14 18">
<path d="M3.3 6.2C2.8 3.5 4.6 1.6 7 1.6C9.6 1.6 11.6 3.6 10.6 6.6L3.5 15.6" stroke="#D82020" stroke-width="3.2" fill="none" stroke-linecap="round"/>
<path d="M3.3 6.2C2.8 3.5 4.6 1.6 7 1.6C9.6 1.6 11.6 3.6 10.6 6.6L3.5 15.6" stroke="#FFF4F4" stroke-width="2.2" fill="none" stroke-dasharray="1.6 1.8" stroke-dashoffset="0.6"/>
</svg>
<svg style="position:absolute;left:658px;top:445px" width="41" height="13" viewBox="0 2 41 13" shape-rendering="crispEdges"><path fill="#000" d="M2 2h1v1h-1zM8 2h1v1h-1zM17 2h1v1h-1zM20 2h1v1h-1zM31 2h1v1h-1zM36 2h1v1h-1zM2 3h1v1h-1zM8 3h1v1h-1zM17 3h1v1h-1zM20 3h1v1h-1zM31 3h1v1h-1zM36 3h1v1h-1zM1 4h1v1h-1zM4 4h9v1h-9zM17 4h1v1h-1zM20 4h7v1h-7zM30 4h1v1h-1zM36 4h1v1h-1zM1 5h1v1h-1zM3 5h1v1h-1zM8 5h1v1h-1zM14 5h6v1h-6zM26 5h1v1h-1zM30 5h1v1h-1zM32 5h9v1h-9zM0 6h3v1h-3zM8 6h1v1h-1zM17 6h1v1h-1zM22 6h1v1h-1zM26 6h1v1h-1zM29 6h2v1h-2zM36 6h1v1h-1zM2 7h1v1h-1zM5 7h7v1h-7zM16 7h3v1h-3zM22 7h1v1h-1zM26 7h1v1h-1zM28 7h1v1h-1zM30 7h1v1h-1zM35 7h3v1h-3zM1 8h1v1h-1zM3 8h1v1h-1zM16 8h2v1h-2zM19 8h1v1h-1zM21 8h1v1h-1zM26 8h1v1h-1zM30 8h1v1h-1zM34 8h1v1h-1zM36 8h1v1h-1zM38 8h1v1h-1zM0 9h3v1h-3zM5 9h7v1h-7zM15 9h1v1h-1zM17 9h1v1h-1zM21 9h1v1h-1zM23 9h1v1h-1zM26 9h1v1h-1zM30 9h1v1h-1zM33 9h1v1h-1zM36 9h1v1h-1zM39 9h1v1h-1zM5 10h1v1h-1zM11 10h1v1h-1zM15 10h1v1h-1zM17 10h1v1h-1zM20 10h5v1h-5zM26 10h1v1h-1zM30 10h1v1h-1zM32 10h1v1h-1zM36 10h1v1h-1zM40 10h1v1h-1zM2 11h2v1h-2zM5 11h1v1h-1zM11 11h1v1h-1zM14 11h1v1h-1zM17 11h1v1h-1zM26 11h1v1h-1zM30 11h1v1h-1zM36 11h1v1h-1zM0 12h2v1h-2zM5 12h1v1h-1zM11 12h1v1h-1zM17 12h1v1h-1zM26 12h1v1h-1zM30 12h1v1h-1zM33 12h7v1h-7zM5 13h7v1h-7zM17 13h1v1h-1zM24 13h1v1h-1zM26 13h1v1h-1zM30 13h1v1h-1zM36 13h1v1h-1zM5 14h1v1h-1zM11 14h1v1h-1zM17 14h1v1h-1zM25 14h1v1h-1zM30 14h1v1h-1zM36 14h1v1h-1z"/></svg>
<div class="a" style="left:0px;top:466px;width:807px;height:17px;background:linear-gradient(#C8C8C8,#BEBEBE);border-bottom:1px solid #8A8A8A"></div>
<div class="a" style="left:42px;top:466px;width:2px;height:16px;background:linear-gradient(90deg,#808080 50%,#E0E0E0 50%)"></div>
<div class="a" style="left:426px;top:466px;width:2px;height:16px;background:linear-gradient(90deg,#808080 50%,#E0E0E0 50%)"></div>
<div class="a" style="left:562px;top:466px;width:2px;height:16px;background:linear-gradient(90deg,#808080 50%,#E0E0E0 50%)"></div>
<svg style="position:absolute;left:47px;top:469px" width="51" height="12" viewBox="0 2 51 12" shape-rendering="crispEdges"><path fill="#000" d="M6 2h1v1h-1zM17 2h1v1h-1zM27 2h1v1h-1zM32 2h1v1h-1zM35 2h1v1h-1zM42 2h1v1h-1zM50 2h1v1h-1zM6 3h1v1h-1zM18 3h1v1h-1zM28 3h1v1h-1zM32 3h1v1h-1zM35 3h1v1h-1zM40 3h1v1h-1zM42 3h1v1h-1zM50 3h1v1h-1zM6 4h1v1h-1zM18 4h1v1h-1zM28 4h1v1h-1zM30 4h8v1h-8zM40 4h6v1h-6zM47 4h1v1h-1zM50 4h1v1h-1zM6 5h1v1h-1zM32 5h1v1h-1zM35 5h1v1h-1zM39 5h1v1h-1zM42 5h1v1h-1zM47 5h1v1h-1zM50 5h1v1h-1zM6 6h1v1h-1zM13 6h12v1h-12zM32 6h1v1h-1zM35 6h1v1h-1zM39 6h7v1h-7zM47 6h1v1h-1zM50 6h1v1h-1zM0 7h12v1h-12zM26 7h3v1h-3zM30 7h8v1h-8zM42 7h1v1h-1zM47 7h1v1h-1zM50 7h1v1h-1zM6 8h1v1h-1zM16 8h1v1h-1zM20 8h1v1h-1zM28 8h1v1h-1zM32 8h1v1h-1zM35 8h1v1h-1zM40 8h6v1h-6zM47 8h1v1h-1zM50 8h1v1h-1zM6 9h1v1h-1zM16 9h1v1h-1zM21 9h1v1h-1zM28 9h1v1h-1zM32 9h1v1h-1zM35 9h1v1h-1zM40 9h1v1h-1zM42 9h1v1h-1zM45 9h1v1h-1zM47 9h1v1h-1zM50 9h1v1h-1zM6 10h1v1h-1zM15 10h1v1h-1zM22 10h1v1h-1zM28 10h1v1h-1zM31 10h1v1h-1zM35 10h1v1h-1zM40 10h1v1h-1zM42 10h1v1h-1zM45 10h1v1h-1zM47 10h1v1h-1zM50 10h1v1h-1zM6 11h1v1h-1zM15 11h1v1h-1zM22 11h1v1h-1zM28 11h1v1h-1zM30 11h1v1h-1zM35 11h1v1h-1zM40 11h1v1h-1zM42 11h1v1h-1zM45 11h1v1h-1zM50 11h1v1h-1zM6 12h1v1h-1zM14 12h1v1h-1zM23 12h1v1h-1zM27 12h1v1h-1zM29 12h1v1h-1zM40 12h1v1h-1zM42 12h1v1h-1zM44 12h2v1h-2zM50 12h1v1h-1zM6 13h1v1h-1zM13 13h1v1h-1zM23 13h1v1h-1zM26 13h1v1h-1zM30 13h8v1h-8zM42 13h1v1h-1zM48 13h3v1h-3z"/></svg>
<div class="t" style="left:431px;top:468px;"><span style="color:#000;">ASCII</span></div>
<div class="a" style="left:0px;top:483px;width:807px;height:173px;background:#FFF8F0"></div>
<div class="a" style="left:42px;top:483px;width:1px;height:173px;background:#808080"></div>
<div class="a" style="left:139px;top:483px;width:1px;height:173px;background:#A0A0A0"></div>
<div class="a" style="left:235px;top:483px;width:1px;height:173px;background:#A0A0A0"></div>
<div class="a" style="left:331px;top:483px;width:1px;height:173px;background:#A0A0A0"></div>
<div class="a" style="left:426px;top:483px;width:1px;height:173px;background:#808080"></div>
<div class="a" style="left:562px;top:483px;width:1px;height:173px;background:#808080"></div>
<div class="a" style="left:0;top:483px;width:807px;height:173px;overflow:hidden">
<div class="a" style="left:46px;top:39px;width:21px;height:13px;background:#C0C0C0"></div>
<div class="a" style="left:430px;top:39px;width:9px;height:13px;background:#C0C0C0"></div>
<div class="t" style="left:0px;top:0px;"><span style="color:#000;">2FC1<b class="z">O</b></span></div>
<div class="t" style="left:47px;top:0px;"><span style="color:#800080;">28</span></div>
<div class="t" style="left:71px;top:0px;"><span style="color:#800080;">31</span></div>
<div class="t" style="left:95px;top:0px;"><span style="color:#000;">E5</span></div>
<div class="t" style="left:119px;top:0px;"><span style="color:#800080;">78</span></div>
<div class="t" style="left:143px;top:0px;"><span style="color:#008000;"><b class="z">O</b><b class="z">O</b></span></div>
<div class="t" style="left:167px;top:0px;"><span style="color:#008000;"><b class="z">O</b><b class="z">O</b></span></div>
<div class="t" style="left:191px;top:0px;"><span style="color:#008000;"><b class="z">O</b><b class="z">O</b></span></div>
<div class="t" style="left:215px;top:0px;"><span style="color:#008000;"><b class="z">O</b><b class="z">O</b></span></div>
<div class="t" style="left:239px;top:0px;"><span style="color:#008000;"><b class="z">O</b><b class="z">O</b></span></div>
<div class="t" style="left:263px;top:0px;"><span style="color:#008000;"><b class="z">O</b><b class="z">O</b></span></div>
<div class="t" style="left:287px;top:0px;"><span style="color:#008000;"><b class="z">O</b><b class="z">O</b></span></div>
<div class="t" style="left:311px;top:0px;"><span style="color:#008000;"><b class="z">O</b><b class="z">O</b></span></div>
<div class="t" style="left:335px;top:0px;"><span style="color:#008000;"><b class="z">O</b><b class="z">O</b></span></div>
<div class="t" style="left:359px;top:0px;"><span style="color:#008000;"><b class="z">O</b><b class="z">O</b></span></div>
<div class="t" style="left:383px;top:0px;"><span style="color:#008000;"><b class="z">O</b><b class="z">O</b></span></div>
<div class="t" style="left:407px;top:0px;"><span style="color:#008000;"><b class="z">O</b><b class="z">O</b></span></div>
<div class="t" style="left:431px;top:0px;"><span style="color:#800080;">(</span><span style="color:#800080;">1</span><span style="color:#000;">å</span><span style="color:#800080;">x</span><span style="color:#008000;">.</span><span style="color:#008000;">.</span><span style="color:#008000;">.</span><span style="color:#008000;">.</span><span style="color:#008000;">.</span><span style="color:#008000;">.</span><span style="color:#008000;">.</span><span style="color:#008000;">.</span><span style="color:#008000;">.</span><span style="color:#008000;">.</span><span style="color:#008000;">.</span><span style="color:#008000;">.</span></div>
<div class="t" style="left:0px;top:13px;"><span style="color:#000;">2FC2<b class="z">O</b></span></div>
<div class="t" style="left:47px;top:13px;"><span style="color:#000;">1<b class="z">O</b></span></div>
<div class="t" style="left:71px;top:13px;"><span style="color:#000;"><b class="z">O</b>2</span></div>
<div class="t" style="left:95px;top:13px;"><span style="color:#008000;"><b class="z">O</b><b class="z">O</b></span></div>
<div class="t" style="left:119px;top:13px;"><span style="color:#008000;"><b class="z">O</b><b class="z">O</b></span></div>
<div class="t" style="left:143px;top:13px;"><span style="color:#008000;"><b class="z">O</b><b class="z">O</b></span></div>
<div class="t" style="left:167px;top:13px;"><span style="color:#008000;"><b class="z">O</b><b class="z">O</b></span></div>
<div class="t" style="left:191px;top:13px;"><span style="color:#008000;"><b class="z">O</b><b class="z">O</b></span></div>
<div class="t" style="left:215px;top:13px;"><span style="color:#008000;"><b class="z">O</b><b class="z">O</b></span></div>
<div class="t" style="left:239px;top:13px;"><span style="color:#008000;"><b class="z">O</b><b class="z">O</b></span></div>
<div class="t" style="left:263px;top:13px;"><span style="color:#008000;"><b class="z">O</b><b class="z">O</b></span></div>
<div class="t" style="left:287px;top:13px;"><span style="color:#000;">11</span></div>
<div class="t" style="left:311px;top:13px;"><span style="color:#008000;"><b class="z">O</b><b class="z">O</b></span></div>
<div class="t" style="left:335px;top:13px;"><span style="color:#008000;"><b class="z">O</b><b class="z">O</b></span></div>
<div class="t" style="left:359px;top:13px;"><span style="color:#008000;"><b class="z">O</b><b class="z">O</b></span></div>
<div class="t" style="left:383px;top:13px;"><span style="color:#008000;"><b class="z">O</b><b class="z">O</b></span></div>
<div class="t" style="left:407px;top:13px;"><span style="color:#008000;"><b class="z">O</b><b class="z">O</b></span></div>
<div class="t" style="left:431px;top:13px;"><span style="color:#000;">.</span><span style="color:#000;">.</span><span style="color:#008000;">.</span><span style="color:#008000;">.</span><span style="color:#008000;">.</span><span style="color:#008000;">.</span><span style="color:#008000;">.</span><span style="color:#008000;">.</span><span style="color:#008000;">.</span><span style="color:#008000;">.</span><span style="color:#000;">.</span><span style="color:#008000;">.</span><span style="color:#008000;">.</span><span style="color:#008000;">.</span><span style="color:#008000;">.</span><span style="color:#008000;">.</span></div>
<div class="t" style="left:0px;top:26px;"><span style="color:#000;">2FC3<b class="z">O</b></span></div>
<div class="t" style="left:47px;top:26px;"><span style="color:#000;"><b class="z">O</b>4</span></div>
<div class="t" style="left:71px;top:26px;"><span style="color:#000;"><b class="z">O</b>1</span></div>
<div class="t" style="left:95px;top:26px;"><span style="color:#008000;"><b class="z">O</b><b class="z">O</b></span></div>
<div class="t" style="left:119px;top:26px;"><span style="color:#008000;"><b class="z">O</b><b class="z">O</b></span></div>
<div class="t" style="left:143px;top:26px;"><span style="color:#008000;"><b class="z">O</b><b class="z">O</b></span></div>
<div class="t" style="left:167px;top:26px;"><span style="color:#008000;"><b class="z">O</b><b class="z">O</b></span></div>
<div class="t" style="left:191px;top:26px;"><span style="color:#008000;"><b class="z">O</b><b class="z">O</b></span></div>
<div class="t" style="left:215px;top:26px;"><span style="color:#008000;"><b class="z">O</b><b class="z">O</b></span></div>
<div class="t" style="left:239px;top:26px;"><span style="color:#000;"><b class="z">O</b>8</span></div>
<div class="t" style="left:263px;top:26px;"><span style="color:#000;"><b class="z">O</b>2</span></div>
<div class="t" style="left:287px;top:26px;"><span style="color:#008000;"><b class="z">O</b><b class="z">O</b></span></div>
<div class="t" style="left:311px;top:26px;"><span style="color:#008000;"><b class="z">O</b><b class="z">O</b></span></div>
<div class="t" style="left:335px;top:26px;"><span style="color:#008000;"><b class="z">O</b><b class="z">O</b></span></div>
<div class="t" style="left:359px;top:26px;"><span style="color:#008000;"><b class="z">O</b><b class="z">O</b></span></div>
<div class="t" style="left:383px;top:26px;"><span style="color:#008000;"><b class="z">O</b><b class="z">O</b></span></div>
<div class="t" style="left:407px;top:26px;"><span style="color:#008000;"><b class="z">O</b><b class="z">O</b></span></div>
<div class="t" style="left:431px;top:26px;"><span style="color:#000;">.</span><span style="color:#000;">.</span><span style="color:#008000;">.</span><span style="color:#008000;">.</span><span style="color:#008000;">.</span><span style="color:#008000;">.</span><span style="color:#008000;">.</span><span style="color:#008000;">.</span><span style="color:#000;">.</span><span style="color:#000;">.</span><span style="color:#008000;">.</span><span style="color:#008000;">.</span><span style="color:#008000;">.</span><span style="color:#008000;">.</span><span style="color:#008000;">.</span><span style="color:#008000;">.</span></div>
<div class="t" style="left:0px;top:39px;"><span style="color:#000;">2FC4<b class="z">O</b></span></div>
<div class="t" style="left:47px;top:39px;"><span style="color:#800080;">2F</span></div>
<div class="t" style="left:71px;top:39px;"><span style="color:#800080;">77</span></div>
<div class="t" style="left:95px;top:39px;"><span style="color:#800080;">7<b class="z">O</b></span></div>
<div class="t" style="left:119px;top:39px;"><span style="color:#800080;">2D</span></div>
<div class="t" style="left:143px;top:39px;"><span style="color:#800080;">63</span></div>
<div class="t" style="left:167px;top:39px;"><span style="color:#800080;">6F</span></div>
<div class="t" style="left:191px;top:39px;"><span style="color:#800080;">6E</span></div>
<div class="t" style="left:215px;top:39px;"><span style="color:#800080;">74</span></div>
<div class="t" style="left:239px;top:39px;"><span style="color:#800080;">65</span></div>
<div class="t" style="left:263px;top:39px;"><span style="color:#800080;">6E</span></div>
<div class="t" style="left:287px;top:39px;"><span style="color:#800080;">74</span></div>
<div class="t" style="left:311px;top:39px;"><span style="color:#800080;">2F</span></div>
<div class="t" style="left:335px;top:39px;"><span style="color:#800080;">74</span></div>
<div class="t" style="left:359px;top:39px;"><span style="color:#800080;">68</span></div>
<div class="t" style="left:383px;top:39px;"><span style="color:#800080;">65</span></div>
<div class="t" style="left:407px;top:39px;"><span style="color:#800080;">6D</span></div>
<div class="t" style="left:431px;top:39px;"><span style="color:#800080;">/</span><span style="color:#800080;">w</span><span style="color:#800080;">p</span><span style="color:#800080;">-</span><span style="color:#800080;">c</span><span style="color:#800080;">o</span><span style="color:#800080;">n</span><span style="color:#800080;">t</span><span style="color:#800080;">e</span><span style="color:#800080;">n</span><span style="color:#800080;">t</span><span style="color:#800080;">/</span><span style="color:#800080;">t</span><span style="color:#800080;">h</span><span style="color:#800080;">e</span><span style="color:#800080;">m</span></div>
<div class="t" style="left:0px;top:52px;"><span style="color:#000;">2FC5<b class="z">O</b></span></div>
<div class="t" style="left:47px;top:52px;"><span style="color:#800080;">65</span></div>
<div class="t" style="left:71px;top:52px;"><span style="color:#800080;">73</span></div>
<div class="t" style="left:95px;top:52px;"><span style="color:#800080;">2F</span></div>
<div class="t" style="left:119px;top:52px;"><span style="color:#800080;">3<b class="z">O</b></span></div>
<div class="t" style="left:143px;top:52px;"><span style="color:#800080;">31</span></div>
<div class="t" style="left:167px;top:52px;"><span style="color:#800080;">31</span></div>
<div class="t" style="left:191px;top:52px;"><span style="color:#800080;">31</span></div>
<div class="t" style="left:215px;top:52px;"><span style="color:#800080;">2F</span></div>
<div class="t" style="left:239px;top:52px;"><span style="color:#800080;">6D</span></div>
<div class="t" style="left:263px;top:52px;"><span style="color:#800080;">6F</span></div>
<div class="t" style="left:287px;top:52px;"><span style="color:#800080;">76</span></div>
<div class="t" style="left:311px;top:52px;"><span style="color:#800080;">69</span></div>
<div class="t" style="left:335px;top:52px;"><span style="color:#800080;">65</span></div>
<div class="t" style="left:359px;top:52px;"><span style="color:#800080;">2E</span></div>
<div class="t" style="left:383px;top:52px;"><span style="color:#800080;">6A</span></div>
<div class="t" style="left:407px;top:52px;"><span style="color:#800080;">7<b class="z">O</b></span></div>
<div class="t" style="left:431px;top:52px;"><span style="color:#800080;">e</span><span style="color:#800080;">s</span><span style="color:#800080;">/</span><span style="color:#800080;"><b class="z">O</b></span><span style="color:#800080;">1</span><span style="color:#800080;">1</span><span style="color:#800080;">1</span><span style="color:#800080;">/</span><span style="color:#800080;">m</span><span style="color:#800080;">o</span><span style="color:#800080;">v</span><span style="color:#800080;">i</span><span style="color:#800080;">e</span><span style="color:#800080;">.</span><span style="color:#800080;">j</span><span style="color:#800080;">p</span></div>
<div class="t" style="left:0px;top:65px;"><span style="color:#000;">2FC6<b class="z">O</b></span></div>
<div class="t" style="left:47px;top:65px;"><span style="color:#800080;">67</span></div>
<div class="t" style="left:71px;top:65px;"><span style="color:#000;">EB</span></div>
<div class="t" style="left:95px;top:65px;"><span style="color:#000;"><b class="z">O</b>E</span></div>
<div class="t" style="left:119px;top:65px;"><span style="color:#000;"><b class="z">O</b>6</span></div>
<div class="t" style="left:143px;top:65px;"><span style="color:#008000;"><b class="z">O</b><b class="z">O</b></span></div>
<div class="t" style="left:167px;top:65px;"><span style="color:#008000;"><b class="z">O</b><b class="z">O</b></span></div>
<div class="t" style="left:191px;top:65px;"><span style="color:#008000;"><b class="z">O</b><b class="z">O</b></span></div>
<div class="t" style="left:215px;top:65px;"><span style="color:#008000;"><b class="z">O</b><b class="z">O</b></span></div>
<div class="t" style="left:239px;top:65px;"><span style="color:#000;"><b class="z">O</b>4</span></div>
<div class="t" style="left:263px;top:65px;"><span style="color:#000;"><b class="z">O</b>1</span></div>
<div class="t" style="left:287px;top:65px;"><span style="color:#008000;"><b class="z">O</b><b class="z">O</b></span></div>
<div class="t" style="left:311px;top:65px;"><span style="color:#008000;"><b class="z">O</b><b class="z">O</b></span></div>
<div class="t" style="left:335px;top:65px;"><span style="color:#008000;"><b class="z">O</b><b class="z">O</b></span></div>
<div class="t" style="left:359px;top:65px;"><span style="color:#008000;"><b class="z">O</b><b class="z">O</b></span></div>
<div class="t" style="left:383px;top:65px;"><span style="color:#008000;"><b class="z">O</b><b class="z">O</b></span></div>
<div class="t" style="left:407px;top:65px;"><span style="color:#008000;"><b class="z">O</b><b class="z">O</b></span></div>
<div class="t" style="left:431px;top:65px;"><span style="color:#800080;">g</span><span style="color:#000;">ë</span><span style="color:#000;">.</span><span style="color:#000;">.</span><span style="color:#008000;">.</span><span style="color:#008000;">.</span><span style="color:#008000;">.</span><span style="color:#008000;">.</span><span style="color:#000;">.</span><span style="color:#000;">.</span><span style="color:#008000;">.</span><span style="color:#008000;">.</span><span style="color:#008000;">.</span><span style="color:#008000;">.</span><span style="color:#008000;">.</span><span style="color:#008000;">.</span></div>
<div class="t" style="left:0px;top:78px;"><span style="color:#000;">2FC7<b class="z">O</b></span></div>
<div class="t" style="left:47px;top:78px;"><span style="color:#000;"><b class="z">O</b>4</span></div>
<div class="t" style="left:71px;top:78px;"><span style="color:#008000;"><b class="z">O</b><b class="z">O</b></span></div>
<div class="t" style="left:95px;top:78px;"><span style="color:#008000;"><b class="z">O</b><b class="z">O</b></span></div>
<div class="t" style="left:119px;top:78px;"><span style="color:#008000;"><b class="z">O</b><b class="z">O</b></span></div>
<div class="t" style="left:143px;top:78px;"><span style="color:#008000;"><b class="z">O</b><b class="z">O</b></span></div>
<div class="t" style="left:167px;top:78px;"><span style="color:#008000;"><b class="z">O</b><b class="z">O</b></span></div>
<div class="t" style="left:191px;top:78px;"><span style="color:#008000;"><b class="z">O</b><b class="z">O</b></span></div>
<div class="t" style="left:215px;top:78px;"><span style="color:#008000;"><b class="z">O</b><b class="z">O</b></span></div>
<div class="t" style="left:239px;top:78px;"><span style="color:#000;"><b class="z">O</b>1</span></div>
<div class="t" style="left:263px;top:78px;"><span style="color:#008000;"><b class="z">O</b><b class="z">O</b></span></div>
<div class="t" style="left:287px;top:78px;"><span style="color:#008000;"><b class="z">O</b><b class="z">O</b></span></div>
<div class="t" style="left:311px;top:78px;"><span style="color:#008000;"><b class="z">O</b><b class="z">O</b></span></div>
<div class="t" style="left:335px;top:78px;"><span style="color:#008000;"><b class="z">O</b><b class="z">O</b></span></div>
<div class="t" style="left:359px;top:78px;"><span style="color:#008000;"><b class="z">O</b><b class="z">O</b></span></div>
<div class="t" style="left:383px;top:78px;"><span style="color:#008000;"><b class="z">O</b><b class="z">O</b></span></div>
<div class="t" style="left:407px;top:78px;"><span style="color:#008000;"><b class="z">O</b><b class="z">O</b></span></div>
<div class="t" style="left:431px;top:78px;"><span style="color:#000;">.</span><span style="color:#008000;">.</span><span style="color:#008000;">.</span><span style="color:#008000;">.</span><span style="color:#008000;">.</span><span style="color:#008000;">.</span><span style="color:#008000;">.</span><span style="color:#008000;">.</span><span style="color:#000;">.</span><span style="color:#008000;">.</span><span style="color:#008000;">.</span><span style="color:#008000;">.</span><span style="color:#008000;">.</span><span style="color:#008000;">.</span><span style="color:#008000;">.</span><span style="color:#008000;">.</span></div>
<div class="t" style="left:0px;top:91px;"><span style="color:#000;">2FC8<b class="z">O</b></span></div>
<div class="t" style="left:47px;top:91px;"><span style="color:#008000;"><b class="z">O</b><b class="z">O</b></span></div>
<div class="t" style="left:71px;top:91px;"><span style="color:#008000;"><b class="z">O</b><b class="z">O</b></span></div>
<div class="t" style="left:95px;top:91px;"><span style="color:#008000;"><b class="z">O</b><b class="z">O</b></span></div>
<div class="t" style="left:119px;top:91px;"><span style="color:#800000;">FF</span></div>
<div class="t" style="left:143px;top:91px;"><span style="color:#008000;"><b class="z">O</b><b class="z">O</b></span></div>
<div class="t" style="left:167px;top:91px;"><span style="color:#008000;"><b class="z">O</b><b class="z">O</b></span></div>
<div class="t" style="left:191px;top:91px;"><span style="color:#008000;"><b class="z">O</b><b class="z">O</b></span></div>
<div class="t" style="left:215px;top:91px;"><span style="color:#008000;"><b class="z">O</b><b class="z">O</b></span></div>
<div class="t" style="left:239px;top:91px;"><span style="color:#800080;">61</span></div>
<div class="t" style="left:263px;top:91px;"><span style="color:#000;">D2</span></div>
<div class="t" style="left:287px;top:91px;"><span style="color:#000;">E7</span></div>
<div class="t" style="left:311px;top:91px;"><span style="color:#800080;">78</span></div>
<div class="t" style="left:335px;top:91px;"><span style="color:#008000;"><b class="z">O</b><b class="z">O</b></span></div>
<div class="t" style="left:359px;top:91px;"><span style="color:#008000;"><b class="z">O</b><b class="z">O</b></span></div>
<div class="t" style="left:383px;top:91px;"><span style="color:#008000;"><b class="z">O</b><b class="z">O</b></span></div>
<div class="t" style="left:407px;top:91px;"><span style="color:#008000;"><b class="z">O</b><b class="z">O</b></span></div>
<div class="t" style="left:431px;top:91px;"><span style="color:#008000;">.</span><span style="color:#008000;">.</span><span style="color:#008000;">.</span><span style="color:#800000;">ÿ</span><span style="color:#008000;">.</span><span style="color:#008000;">.</span><span style="color:#008000;">.</span><span style="color:#008000;">.</span><span style="color:#800080;">a</span><span style="color:#000;">Ò</span><span style="color:#000;">ç</span><span style="color:#800080;">x</span><span style="color:#008000;">.</span><span style="color:#008000;">.</span><span style="color:#008000;">.</span><span style="color:#008000;">.</span></div>
<div class="t" style="left:0px;top:104px;"><span style="color:#000;">2FC9<b class="z">O</b></span></div>
<div class="t" style="left:47px;top:104px;"><span style="color:#000;"><b class="z">O</b>1</span></div>
<div class="t" style="left:71px;top:104px;"><span style="color:#008000;"><b class="z">O</b><b class="z">O</b></span></div>
<div class="t" style="left:95px;top:104px;"><span style="color:#008000;"><b class="z">O</b><b class="z">O</b></span></div>
<div class="t" style="left:119px;top:104px;"><span style="color:#008000;"><b class="z">O</b><b class="z">O</b></span></div>
<div class="t" style="left:143px;top:104px;"><span style="color:#008000;"><b class="z">O</b><b class="z">O</b></span></div>
<div class="t" style="left:167px;top:104px;"><span style="color:#008000;"><b class="z">O</b><b class="z">O</b></span></div>
<div class="t" style="left:191px;top:104px;"><span style="color:#008000;"><b class="z">O</b><b class="z">O</b></span></div>
<div class="t" style="left:215px;top:104px;"><span style="color:#008000;"><b class="z">O</b><b class="z">O</b></span></div>
<div class="t" style="left:239px;top:104px;"><span style="color:#800080;">2B</span></div>
<div class="t" style="left:263px;top:104px;"><span style="color:#000;">C1</span></div>
<div class="t" style="left:287px;top:104px;"><span style="color:#000;">E6</span></div>
<div class="t" style="left:311px;top:104px;"><span style="color:#800080;">78</span></div>
<div class="t" style="left:335px;top:104px;"><span style="color:#008000;"><b class="z">O</b><b class="z">O</b></span></div>
<div class="t" style="left:359px;top:104px;"><span style="color:#008000;"><b class="z">O</b><b class="z">O</b></span></div>
<div class="t" style="left:383px;top:104px;"><span style="color:#008000;"><b class="z">O</b><b class="z">O</b></span></div>
<div class="t" style="left:407px;top:104px;"><span style="color:#008000;"><b class="z">O</b><b class="z">O</b></span></div>
<div class="t" style="left:431px;top:104px;"><span style="color:#000;">.</span><span style="color:#008000;">.</span><span style="color:#008000;">.</span><span style="color:#008000;">.</span><span style="color:#008000;">.</span><span style="color:#008000;">.</span><span style="color:#008000;">.</span><span style="color:#008000;">.</span><span style="color:#800080;">+</span><span style="color:#000;">Á</span><span style="color:#000;">æ</span><span style="color:#800080;">x</span><span style="color:#008000;">.</span><span style="color:#008000;">.</span><span style="color:#008000;">.</span><span style="color:#008000;">.</span></div>
<div class="t" style="left:0px;top:117px;"><span style="color:#000;">2FCA<b class="z">O</b></span></div>
<div class="t" style="left:47px;top:117px;"><span style="color:#008000;"><b class="z">O</b><b class="z">O</b></span></div>
<div class="t" style="left:71px;top:117px;"><span style="color:#008000;"><b class="z">O</b><b class="z">O</b></span></div>
<div class="t" style="left:95px;top:117px;"><span style="color:#008000;"><b class="z">O</b><b class="z">O</b></span></div>
<div class="t" style="left:119px;top:117px;"><span style="color:#008000;"><b class="z">O</b><b class="z">O</b></span></div>
<div class="t" style="left:143px;top:117px;"><span style="color:#008000;"><b class="z">O</b><b class="z">O</b></span></div>
<div class="t" style="left:167px;top:117px;"><span style="color:#008000;"><b class="z">O</b><b class="z">O</b></span></div>
<div class="t" style="left:191px;top:117px;"><span style="color:#008000;"><b class="z">O</b><b class="z">O</b></span></div>
<div class="t" style="left:215px;top:117px;"><span style="color:#008000;"><b class="z">O</b><b class="z">O</b></span></div>
<div class="t" style="left:239px;top:117px;"><span style="color:#000;">D8</span></div>
<div class="t" style="left:263px;top:117px;"><span style="color:#000;">8<b class="z">O</b></span></div>
<div class="t" style="left:287px;top:117px;"><span style="color:#000;">F7</span></div>
<div class="t" style="left:311px;top:117px;"><span style="color:#800080;">78</span></div>
<div class="t" style="left:335px;top:117px;"><span style="color:#008000;"><b class="z">O</b><b class="z">O</b></span></div>
<div class="t" style="left:359px;top:117px;"><span style="color:#008000;"><b class="z">O</b><b class="z">O</b></span></div>
<div class="t" style="left:383px;top:117px;"><span style="color:#008000;"><b class="z">O</b><b class="z">O</b></span></div>
<div class="t" style="left:407px;top:117px;"><span style="color:#008000;"><b class="z">O</b><b class="z">O</b></span></div>
<div class="t" style="left:431px;top:117px;"><span style="color:#008000;">.</span><span style="color:#008000;">.</span><span style="color:#008000;">.</span><span style="color:#008000;">.</span><span style="color:#008000;">.</span><span style="color:#008000;">.</span><span style="color:#008000;">.</span><span style="color:#008000;">.</span><span style="color:#000;">Ø</span><span style="color:#000;">.</span><span style="color:#000;">÷</span><span style="color:#800080;">x</span><span style="color:#008000;">.</span><span style="color:#008000;">.</span><span style="color:#008000;">.</span><span style="color:#008000;">.</span></div>
<div class="t" style="left:0px;top:130px;"><span style="color:#000;">2FCB<b class="z">O</b></span></div>
<div class="t" style="left:47px;top:130px;"><span style="color:#008000;"><b class="z">O</b><b class="z">O</b></span></div>
<div class="t" style="left:71px;top:130px;"><span style="color:#008000;"><b class="z">O</b><b class="z">O</b></span></div>
<div class="t" style="left:95px;top:130px;"><span style="color:#008000;"><b class="z">O</b><b class="z">O</b></span></div>
<div class="t" style="left:119px;top:130px;"><span style="color:#008000;"><b class="z">O</b><b class="z">O</b></span></div>
<div class="t" style="left:143px;top:130px;"><span style="color:#008000;"><b class="z">O</b><b class="z">O</b></span></div>
<div class="t" style="left:167px;top:130px;"><span style="color:#008000;"><b class="z">O</b><b class="z">O</b></span></div>
<div class="t" style="left:191px;top:130px;"><span style="color:#008000;"><b class="z">O</b><b class="z">O</b></span></div>
<div class="t" style="left:215px;top:130px;"><span style="color:#008000;"><b class="z">O</b><b class="z">O</b></span></div>
<div class="t" style="left:239px;top:130px;"><span style="color:#800080;">5D</span></div>
<div class="t" style="left:263px;top:130px;"><span style="color:#000;">E2</span></div>
<div class="t" style="left:287px;top:130px;"><span style="color:#000;">E8</span></div>
<div class="t" style="left:311px;top:130px;"><span style="color:#800080;">78</span></div>
<div class="t" style="left:335px;top:130px;"><span style="color:#008000;"><b class="z">O</b><b class="z">O</b></span></div>
<div class="t" style="left:359px;top:130px;"><span style="color:#008000;"><b class="z">O</b><b class="z">O</b></span></div>
<div class="t" style="left:383px;top:130px;"><span style="color:#008000;"><b class="z">O</b><b class="z">O</b></span></div>
<div class="t" style="left:407px;top:130px;"><span style="color:#008000;"><b class="z">O</b><b class="z">O</b></span></div>
<div class="t" style="left:431px;top:130px;"><span style="color:#008000;">.</span><span style="color:#008000;">.</span><span style="color:#008000;">.</span><span style="color:#008000;">.</span><span style="color:#008000;">.</span><span style="color:#008000;">.</span><span style="color:#008000;">.</span><span style="color:#008000;">.</span><span style="color:#800080;">]</span><span style="color:#000;">â</span><span style="color:#000;">è</span><span style="color:#800080;">x</span><span style="color:#008000;">.</span><span style="color:#008000;">.</span><span style="color:#008000;">.</span><span style="color:#008000;">.</span></div>
<div class="t" style="left:0px;top:143px;"><span style="color:#000;">2FCC<b class="z">O</b></span></div>
<div class="t" style="left:47px;top:143px;"><span style="color:#008000;"><b class="z">O</b><b class="z">O</b></span></div>
<div class="t" style="left:71px;top:143px;"><span style="color:#008000;"><b class="z">O</b><b class="z">O</b></span></div>
<div class="t" style="left:95px;top:143px;"><span style="color:#008000;"><b class="z">O</b><b class="z">O</b></span></div>
<div class="t" style="left:119px;top:143px;"><span style="color:#008000;"><b class="z">O</b><b class="z">O</b></span></div>
<div class="t" style="left:143px;top:143px;"><span style="color:#008000;"><b class="z">O</b><b class="z">O</b></span></div>
<div class="t" style="left:167px;top:143px;"><span style="color:#008000;"><b class="z">O</b><b class="z">O</b></span></div>
<div class="t" style="left:191px;top:143px;"><span style="color:#008000;"><b class="z">O</b><b class="z">O</b></span></div>
<div class="t" style="left:215px;top:143px;"><span style="color:#008000;"><b class="z">O</b><b class="z">O</b></span></div>
<div class="t" style="left:239px;top:143px;"><span style="color:#008000;"><b class="z">O</b><b class="z">O</b></span></div>
<div class="t" style="left:263px;top:143px;"><span style="color:#008000;"><b class="z">O</b><b class="z">O</b></span></div>
<div class="t" style="left:287px;top:143px;"><span style="color:#008000;"><b class="z">O</b><b class="z">O</b></span></div>
<div class="t" style="left:311px;top:143px;"><span style="color:#008000;"><b class="z">O</b><b class="z">O</b></span></div>
<div class="t" style="left:335px;top:143px;"><span style="color:#008000;"><b class="z">O</b><b class="z">O</b></span></div>
<div class="t" style="left:359px;top:143px;"><span style="color:#008000;"><b class="z">O</b><b class="z">O</b></span></div>
<div class="t" style="left:383px;top:143px;"><span style="color:#008000;"><b class="z">O</b><b class="z">O</b></span></div>
<div class="t" style="left:407px;top:143px;"><span style="color:#008000;"><b class="z">O</b><b class="z">O</b></span></div>
<div class="t" style="left:431px;top:143px;"><span style="color:#008000;">.</span><span style="color:#008000;">.</span><span style="color:#008000;">.</span><span style="color:#008000;">.</span><span style="color:#008000;">.</span><span style="color:#008000;">.</span><span style="color:#008000;">.</span><span style="color:#008000;">.</span><span style="color:#008000;">.</span><span style="color:#008000;">.</span><span style="color:#008000;">.</span><span style="color:#008000;">.</span><span style="color:#008000;">.</span><span style="color:#008000;">.</span><span style="color:#008000;">.</span><span style="color:#008000;">.</span></div>
<div class="t" style="left:0px;top:156px;"><span style="color:#000;">2FCD<b class="z">O</b></span></div>
<div class="t" style="left:47px;top:156px;"><span style="color:#008000;"><b class="z">O</b><b class="z">O</b></span></div>
<div class="t" style="left:71px;top:156px;"><span style="color:#008000;"><b class="z">O</b><b class="z">O</b></span></div>
<div class="t" style="left:95px;top:156px;"><span style="color:#008000;"><b class="z">O</b><b class="z">O</b></span></div>
<div class="t" style="left:119px;top:156px;"><span style="color:#008000;"><b class="z">O</b><b class="z">O</b></span></div>
<div class="t" style="left:143px;top:156px;"><span style="color:#008000;"><b class="z">O</b><b class="z">O</b></span></div>
<div class="t" style="left:167px;top:156px;"><span style="color:#008000;"><b class="z">O</b><b class="z">O</b></span></div>
<div class="t" style="left:191px;top:156px;"><span style="color:#008000;"><b class="z">O</b><b class="z">O</b></span></div>
<div class="t" style="left:215px;top:156px;"><span style="color:#008000;"><b class="z">O</b><b class="z">O</b></span></div>
<div class="t" style="left:239px;top:156px;"><span style="color:#008000;"><b class="z">O</b><b class="z">O</b></span></div>
<div class="t" style="left:263px;top:156px;"><span style="color:#008000;"><b class="z">O</b><b class="z">O</b></span></div>
<div class="t" style="left:287px;top:156px;"><span style="color:#008000;"><b class="z">O</b><b class="z">O</b></span></div>
<div class="t" style="left:311px;top:156px;"><span style="color:#008000;"><b class="z">O</b><b class="z">O</b></span></div>
<div class="t" style="left:335px;top:156px;"><span style="color:#008000;"><b class="z">O</b><b class="z">O</b></span></div>
<div class="t" style="left:359px;top:156px;"><span style="color:#008000;"><b class="z">O</b><b class="z">O</b></span></div>
<div class="t" style="left:383px;top:156px;"><span style="color:#008000;"><b class="z">O</b><b class="z">O</b></span></div>
<div class="t" style="left:407px;top:156px;"><span style="color:#008000;"><b class="z">O</b><b class="z">O</b></span></div>
<div class="t" style="left:431px;top:156px;"><span style="color:#008000;">.</span><span style="color:#008000;">.</span><span style="color:#008000;">.</span><span style="color:#008000;">.</span><span style="color:#008000;">.</span><span style="color:#008000;">.</span><span style="color:#008000;">.</span><span style="color:#008000;">.</span><span style="color:#008000;">.</span><span style="color:#008000;">.</span><span style="color:#008000;">.</span><span style="color:#008000;">.</span><span style="color:#008000;">.</span><span style="color:#008000;">.</span><span style="color:#008000;">.</span><span style="color:#008000;">.</span></div>
<div class="t" style="left:0px;top:169px;"><span style="color:#000;">2FCE<b class="z">O</b></span></div>
<div class="t" style="left:47px;top:169px;"><span style="color:#008000;"><b class="z">O</b><b class="z">O</b></span></div>
<div class="t" style="left:71px;top:169px;"><span style="color:#000;">EB</span></div>
<div class="t" style="left:95px;top:169px;"><span style="color:#800080;">22</span></div>
<div class="t" style="left:119px;top:169px;"><span style="color:#000;"><b class="z">O</b>8</span></div>
<div class="t" style="left:143px;top:169px;"><span style="color:#008000;"><b class="z">O</b><b class="z">O</b></span></div>
<div class="t" style="left:167px;top:169px;"><span style="color:#008000;"><b class="z">O</b><b class="z">O</b></span></div>
<div class="t" style="left:191px;top:169px;"><span style="color:#008000;"><b class="z">O</b><b class="z">O</b></span></div>
<div class="t" style="left:215px;top:169px;"><span style="color:#008000;"><b class="z">O</b><b class="z">O</b></span></div>
<div class="t" style="left:239px;top:169px;"><span style="color:#008000;"><b class="z">O</b><b class="z">O</b></span></div>
<div class="t" style="left:263px;top:169px;"><span style="color:#008000;"><b class="z">O</b><b class="z">O</b></span></div>
<div class="t" style="left:287px;top:169px;"><span style="color:#008000;"><b class="z">O</b><b class="z">O</b></span></div>
<div class="t" style="left:311px;top:169px;"><span style="color:#008000;"><b class="z">O</b><b class="z">O</b></span></div>
<div class="t" style="left:335px;top:169px;"><span style="color:#008000;"><b class="z">O</b><b class="z">O</b></span></div>
<div class="t" style="left:359px;top:169px;"><span style="color:#008000;"><b class="z">O</b><b class="z">O</b></span></div>
<div class="t" style="left:383px;top:169px;"><span style="color:#008000;"><b class="z">O</b><b class="z">O</b></span></div>
<div class="t" style="left:407px;top:169px;"><span style="color:#008000;"><b class="z">O</b><b class="z">O</b></span></div>
<div class="t" style="left:431px;top:169px;"><span style="color:#008000;">.</span><span style="color:#000;">ë</span><span style="color:#800080;">"</span><span style="color:#000;">.</span><span style="color:#008000;">.</span><span style="color:#008000;">.</span><span style="color:#008000;">.</span><span style="color:#008000;">.</span><span style="color:#008000;">.</span><span style="color:#008000;">.</span><span style="color:#008000;">.</span><span style="color:#008000;">.</span><span style="color:#008000;">.</span><span style="color:#008000;">.</span><span style="color:#008000;">.</span><span style="color:#008000;">.</span></div>
</div>
<div class="a" style="left:48px;top:494px;width:183px;height:2px;background:#FF0000"></div>
<div class="a" style="left:240px;top:507px;width:183px;height:2px;background:#000080"></div>
<div class="a" style="left:48px;top:559px;width:183px;height:2px;background:#000080"></div>
<div class="a" style="left:240px;top:585px;width:183px;height:2px;background:#FF0000"></div>
<div class="a" style="left:240px;top:598px;width:183px;height:2px;background:#FF0000"></div>
<div class="a" style="left:240px;top:611px;width:183px;height:2px;background:#800000"></div>
<div class="a" style="left:240px;top:624px;width:183px;height:2px;background:#FF0000"></div>
<div class="a" style="left:807px;top:466px;width:23px;height:190px;background:linear-gradient(90deg,#F2F2F2,#E8E8E8);border-left:1px solid #A0A0A0;border-right:1px solid #A0A0A0"></div>
<svg class="a" style="left:813px;top:472px" width="12" height="8"><path d="M1 6.5L6 1.5L11 6.5Z" fill="#3A3A3A"/></svg>
<div class="a" style="left:808px;top:647px;width:20px;height:12px;background:linear-gradient(90deg,#F4F4F4 45%,#D8D8D8 46%);border:1px solid #8E8E8E;border-radius:2px"></div>
<div class="a" style="left:830px;top:436px;width:993px;height:30px;background:#F0F0F0"></div>
<div class="a" style="left:830px;top:465px;width:993px;height:1px;background:#8A9099"></div>
<div class="a" style="left:830px;top:436px;width:2px;height:220px;background:#F0F0F0"></div>
<div class="a" style="left:927px;top:440px;width:124px;height:25px;background:linear-gradient(#F3F3F3 0,#EBEBEB 45%,#DEDEDE 55%,#D8D8D8);border-top:1px solid #A3A9B0;border-right:2px solid #9CA2AA"></div>
<div class="a" style="left:1051px;top:440px;width:101px;height:25px;background:linear-gradient(#F3F3F3 0,#EBEBEB 45%,#DEDEDE 55%,#D8D8D8);border-top:1px solid #A3A9B0;border-right:2px solid #9CA2AA"></div>
<div class="a" style="left:1152px;top:440px;width:116px;height:25px;background:linear-gradient(#F3F3F3 0,#EBEBEB 45%,#DEDEDE 55%,#D8D8D8);border-top:1px solid #A3A9B0;border-right:2px solid #9CA2AA"></div>
<div class="a" style="left:831px;top:437px;width:96px;height:28px;background:#FFFFFF;border:1px solid #8A9099;border-bottom:none"></div>
<div class="t" style="left:849px;top:441px;font-family:'Liberation Sans',sans-serif;font-size:17px;line-height:18px;height:18px;color:#3A3A3A">S</div>
<div class="t" style="left:868px;top:447px;"><span style="color:#000;">Stack</span></div>
<svg class="a" style="left:935px;top:440px" width="26" height="20">
<path d="M8.5 13.4L17.9 4L21.3 7.4L13.5 16.8L12 14.6L10.3 16.8Z" fill="#E02A2A" stroke="#C01818" stroke-width="0.6"/>
<path d="M5 13.4L14.4 4L17.8 7.2L11 16.8L9.5 14.6L8 16.8Z" fill="#F46A6A" stroke="#D02020" stroke-width="0.7"/>
</svg>
<div class="t" style="left:961px;top:447px;"><span style="color:#000;">Bookmarks</span></div>
<svg class="a" style="left:1062px;top:440px" width="26" height="20">
<g transform="translate(5.5,12.5) rotate(-42)"><path d="M0 0H10L13 2.6L10 5.2H0Z" fill="#FFFFFF" stroke="#6A7A7A" stroke-width="0.8"/><rect x="1" y="1.4" width="8" height="2.4" fill="#1C98E0"/><circle cx="10.8" cy="2.6" r="0.9" fill="#4A5A5A"/></g>
<g transform="translate(9.5,15) rotate(-42)"><path d="M0 0H10L13 2.6L10 5.2H0Z" fill="#FFFFFF" stroke="#6A7A7A" stroke-width="0.8"/><rect x="1" y="1.4" width="8" height="2.4" fill="#1C98E0"/><circle cx="10.8" cy="2.6" r="0.9" fill="#4A5A5A"/></g>
</svg>
<div class="t" style="left:1087px;top:447px;"><span style="color:#000;">Labels</span></div>
<svg class="a" style="left:1162px;top:438px" width="26" height="24">
<defs><linearGradient id="cg" x1="0" y1="0" x2="1" y2="1"><stop offset="0" stop-color="#FFF8E0"/><stop offset="1" stop-color="#E4DC60"/></linearGradient></defs>
<path d="M8.5 5.5H19.5Q20.5 5.5 20.5 6.5V11.2Q20.5 12.2 19.5 12.2H12L11 13.6L10.6 12.2H8.5Q7.5 12.2 7.5 11.2V6.5Q7.5 5.5 8.5 5.5Z" fill="url(#cg)" stroke="#C0904A" stroke-width="1"/>
<path d="M8.5 14.4H19.5Q20.5 14.4 20.5 15.4V17.8Q20.5 18.8 19.5 18.8H12L10.8 20.6L10.6 18.8H8.5Q7.5 18.8 7.5 17.8V15.4Q7.5 14.4 8.5 14.4Z" fill="url(#cg)" stroke="#C0904A" stroke-width="1"/>
</svg>
<div class="t" style="left:1189px;top:447px;"><span style="color:#000;">Comments</span></div>
<div class="a" style="left:832px;top:466px;width:991px;height:190px;background:#FFF8F0"></div>
<div class="a" style="left:832px;top:466px;width:135px;height:13px;background:#000"></div>
<div class="a" style="left:968px;top:466px;width:835px;height:13px;background:#C0C0C0"></div>
<div class="a" style="left:967px;top:466px;width:1px;height:190px;background:#808080"></div>
<div class="a" style="left:1155px;top:466px;width:1px;height:190px;background:#808080"></div>
<div class="a" style="left:832px;top:466px;width:973px;height:190px;overflow:hidden">
<div class="t" style="left:4px;top:0px;"><span style="color:#FFF;"><b class="z">O</b><b class="z">O</b><b class="z">O</b><b class="z">O</b><b class="z">O</b><b class="z">O</b><b class="z">O</b><b class="z">O</b><b class="z">O</b>822F9D8</span></div>
<div class="t" style="left:143px;top:0px;"><span style="color:#000;"><b class="z">O</b><b class="z">O</b><b class="z">O</b><b class="z">O</b><b class="z">O</b><b class="z">O</b><b class="z">O</b><b class="z">O</b><b class="z">O</b>489<b class="z">O</b>371</span></div>
<div class="t" style="left:4px;top:13px;"><span style="color:#808080;"><b class="z">O</b><b class="z">O</b><b class="z">O</b><b class="z">O</b><b class="z">O</b><b class="z">O</b><b class="z">O</b><b class="z">O</b><b class="z">O</b>822F9E<b class="z">O</b></span></div>
<div class="t" style="left:140px;top:13px;"><span style="color:#000;"><b class="z">O</b><b class="z">O</b><b class="z">O</b><b class="z">O</b><b class="z">O</b><b class="z">O</b><b class="z">O</b><b class="z">O</b><b class="z">O</b><b class="z">O</b><b class="z">O</b><b class="z">O</b><b class="z">O</b><b class="z">O</b><b class="z">O</b><b class="z">O</b></span></div>
<div class="t" style="left:4px;top:26px;"><span style="color:#808080;"><b class="z">O</b><b class="z">O</b><b class="z">O</b><b class="z">O</b><b class="z">O</b><b class="z">O</b><b class="z">O</b><b class="z">O</b><b class="z">O</b>822F9E8</span></div>
<div class="t" style="left:140px;top:26px;"><span style="color:#000;"><b class="z">O</b><b class="z">O</b><b class="z">O</b><b class="z">O</b><b class="z">O</b><b class="z">O</b><b class="z">O</b><b class="z">O</b><b class="z">O</b><b class="z">O</b><b class="z">O</b><b class="z">O</b><b class="z">O</b><b class="z">O</b><b class="z">O</b><b class="z">O</b></span></div>
<div class="t" style="left:4px;top:39px;"><span style="color:#808080;"><b class="z">O</b><b class="z">O</b><b class="z">O</b><b class="z">O</b><b class="z">O</b><b class="z">O</b><b class="z">O</b><b class="z">O</b><b class="z">O</b>822F9F<b class="z">O</b></span></div>
<div class="t" style="left:140px;top:39px;"><span style="color:#000;"><b class="z">O</b><b class="z">O</b><b class="z">O</b><b class="z">O</b><b class="z">O</b><b class="z">O</b><b class="z">O</b><b class="z">O</b><b class="z">O</b><b class="z">O</b><b class="z">O</b><b class="z">O</b><b class="z">O</b><b class="z">O</b><b class="z">O</b><b class="z">O</b></span></div>
<div class="t" style="left:4px;top:52px;"><span style="color:#808080;"><b class="z">O</b><b class="z">O</b><b class="z">O</b><b class="z">O</b><b class="z">O</b><b class="z">O</b><b class="z">O</b><b class="z">O</b><b class="z">O</b>822F9F8</span></div>
<div class="t" style="left:140px;top:52px;"><span style="color:#000;"><b class="z">O</b><b class="z">O</b><b class="z">O</b><b class="z">O</b><b class="z">O</b><b class="z">O</b><b class="z">O</b><b class="z">O</b><b class="z">O</b><b class="z">O</b><b class="z">O</b><b class="z">O</b><b class="z">O</b><b class="z">O</b><b class="z">O</b><b class="z">O</b></span></div>
<div class="t" style="left:4px;top:65px;"><span style="color:#808080;"><b class="z">O</b><b class="z">O</b><b class="z">O</b><b class="z">O</b><b class="z">O</b><b class="z">O</b><b class="z">O</b><b class="z">O</b><b class="z">O</b>822FA<b class="z">O</b><b class="z">O</b></span></div>
<div class="t" style="left:140px;top:65px;"><span style="color:#000;"><b class="z">O</b><b class="z">O</b><b class="z">O</b><b class="z">O</b><b class="z">O</b><b class="z">O</b><b class="z">O</b><b class="z">O</b><b class="z">O</b><b class="z">O</b><b class="z">O</b><b class="z">O</b><b class="z">O</b><b class="z">O</b><b class="z">O</b><b class="z">O</b></span></div>
<div class="t" style="left:4px;top:78px;"><span style="color:#808080;"><b class="z">O</b><b class="z">O</b><b class="z">O</b><b class="z">O</b><b class="z">O</b><b class="z">O</b><b class="z">O</b><b class="z">O</b><b class="z">O</b>822FA<b class="z">O</b>8</span></div>
<div class="t" style="left:140px;top:78px;"><span style="color:#000;"><b class="z">O</b><b class="z">O</b><b class="z">O</b><b class="z">O</b><b class="z">O</b><b class="z">O</b><b class="z">O</b><b class="z">O</b><b class="z">O</b><b class="z">O</b><b class="z">O</b><b class="z">O</b><b class="z">O</b><b class="z">O</b><b class="z">O</b><b class="z">O</b></span></div>
<div class="t" style="left:4px;top:91px;"><span style="color:#808080;"><b class="z">O</b><b class="z">O</b><b class="z">O</b><b class="z">O</b><b class="z">O</b><b class="z">O</b><b class="z">O</b><b class="z">O</b><b class="z">O</b>822FA1<b class="z">O</b></span></div>
<div class="t" style="left:140px;top:91px;"><span style="color:#000;"><b class="z">O</b><b class="z">O</b><b class="z">O</b><b class="z">O</b><b class="z">O</b><b class="z">O</b><b class="z">O</b><b class="z">O</b><b class="z">O</b><b class="z">O</b><b class="z">O</b><b class="z">O</b><b class="z">O</b><b class="z">O</b><b class="z">O</b><b class="z">O</b></span></div>
<div class="t" style="left:4px;top:104px;"><span style="color:#808080;"><b class="z">O</b><b class="z">O</b><b class="z">O</b><b class="z">O</b><b class="z">O</b><b class="z">O</b><b class="z">O</b><b class="z">O</b><b class="z">O</b>822FA18</span></div>
<div class="t" style="left:140px;top:104px;"><span style="color:#000;"><b class="z">O</b><b class="z">O</b><b class="z">O</b><b class="z">O</b><b class="z">O</b><b class="z">O</b><b class="z">O</b><b class="z">O</b><b class="z">O</b><b class="z">O</b><b class="z">O</b><b class="z">O</b><b class="z">O</b><b class="z">O</b><b class="z">O</b><b class="z">O</b></span></div>
<div class="t" style="left:4px;top:117px;"><span style="color:#808080;"><b class="z">O</b><b class="z">O</b><b class="z">O</b><b class="z">O</b><b class="z">O</b><b class="z">O</b><b class="z">O</b><b class="z">O</b><b class="z">O</b>822FA2<b class="z">O</b></span></div>
<div class="t" style="left:140px;top:117px;"><span style="color:#000;"><b class="z">O</b><b class="z">O</b>2A2F2A<b class="z">O</b><b class="z">O</b><b class="z">O</b><b class="z">O</b><b class="z">O</b><b class="z">O</b><b class="z">O</b><b class="z">O</b></span></div>
<div class="t" style="left:4px;top:130px;"><span style="color:#808080;"><b class="z">O</b><b class="z">O</b><b class="z">O</b><b class="z">O</b><b class="z">O</b><b class="z">O</b><b class="z">O</b><b class="z">O</b><b class="z">O</b>822FA28</span></div>
<div class="t" style="left:140px;top:130px;"><span style="color:#000;">2E74656E496E6957</span></div>
<div class="t" style="left:4px;top:143px;"><span style="color:#808080;"><b class="z">O</b><b class="z">O</b><b class="z">O</b><b class="z">O</b><b class="z">O</b><b class="z">O</b><b class="z">O</b><b class="z">O</b><b class="z">O</b>822FA3<b class="z">O</b></span></div>
<div class="t" style="left:140px;top:143px;"><span style="color:#000;"><b class="z">O</b><b class="z">O</b><b class="z">O</b><b class="z">O</b><b class="z">O</b><b class="z">O</b><b class="z">O</b><b class="z">O</b><b class="z">O</b><b class="z">O</b>6C6C64</span></div>
<div class="t" style="left:4px;top:156px;"><span style="color:#808080;"><b class="z">O</b><b class="z">O</b><b class="z">O</b><b class="z">O</b><b class="z">O</b><b class="z">O</b><b class="z">O</b><b class="z">O</b><b class="z">O</b>822FA38</span></div>
<div class="t" style="left:140px;top:156px;"><span style="color:#000;"><b class="z">O</b><b class="z">O</b><b class="z">O</b><b class="z">O</b><b class="z">O</b><b class="z">O</b><b class="z">O</b><b class="z">O</b><b class="z">O</b><b class="z">O</b>544547</span></div>
<div class="t" style="left:4px;top:169px;"><span style="color:#808080;"><b class="z">O</b><b class="z">O</b><b class="z">O</b><b class="z">O</b><b class="z">O</b><b class="z">O</b><b class="z">O</b><b class="z">O</b><b class="z">O</b>822FA4<b class="z">O</b></span></div>
<div class="t" style="left:140px;top:169px;"><span style="color:#000;"><b class="z">O</b><b class="z">O</b><b class="z">O</b><b class="z">O</b><b class="z">O</b>7FFFFFD4<b class="z">O</b><b class="z">O</b><b class="z">O</b></span></div>
<div class="t" style="left:4px;top:182px;"><span style="color:#808080;"><b class="z">O</b><b class="z">O</b><b class="z">O</b><b class="z">O</b><b class="z">O</b><b class="z">O</b><b class="z">O</b><b class="z">O</b><b class="z">O</b>822FA48</span></div>
<div class="t" style="left:140px;top:182px;"><span style="color:#000;"><b class="z">O</b><b class="z">O</b><b class="z">O</b><b class="z">O</b><b class="z">O</b><b class="z">O</b><b class="z">O</b><b class="z">O</b><b class="z">O</b><b class="z">O</b><b class="z">O</b><b class="z">O</b><b class="z">O</b><b class="z">O</b><b class="z">O</b><b class="z">O</b></span></div>
<div class="a" style="left:137px;top:2px;width:5px;height:8px;border:2px solid #000;border-right:none;border-top-width:1.5px;border-bottom-width:1.5px"></div>
<div class="t" style="left:373px;top:0px;"><span style="color:#FF0000;"><b class="z">O</b><b class="z">O</b><b class="z">O</b><b class="z">O</b><b class="z">O</b><b class="z">O</b><b class="z">O</b><b class="z">O</b><b class="z">O</b>489<b class="z">O</b>371</span></div>
<div class="t" style="left:533px;top:0px;"><span style="color:#FF0000;"><b class="z">O</b><b class="z">O</b><b class="z">O</b><b class="z">O</b><b class="z">O</b><b class="z">O</b><b class="z">O</b><b class="z">O</b><b class="z">O</b>489<b class="z">O</b>CD<b class="z">O</b></span></div>
</div>
<svg style="position:absolute;left:1161px;top:466px" width="38" height="12" viewBox="0 2 38 12" shape-rendering="crispEdges"><path fill="#FF0000" d="M1 2h1v1h-1zM9 2h2v1h-2zM13 2h11v1h-11zM37 2h1v1h-1zM2 3h1v1h-1zM5 3h4v1h-4zM13 3h1v1h-1zM23 3h1v1h-1zM26 3h7v1h-7zM37 3h1v1h-1zM2 4h1v1h-1zM5 4h1v1h-1zM13 4h1v1h-1zM23 4h1v1h-1zM29 4h1v1h-1zM34 4h1v1h-1zM37 4h1v1h-1zM5 5h6v1h-6zM13 5h1v1h-1zM16 5h5v1h-5zM23 5h1v1h-1zM28 5h1v1h-1zM31 5h1v1h-1zM34 5h1v1h-1zM37 5h1v1h-1zM5 6h2v1h-2zM10 6h1v1h-1zM13 6h1v1h-1zM16 6h1v1h-1zM20 6h1v1h-1zM23 6h1v1h-1zM27 6h6v1h-6zM34 6h1v1h-1zM37 6h1v1h-1zM0 7h3v1h-3zM5 7h1v1h-1zM7 7h1v1h-1zM10 7h1v1h-1zM13 7h1v1h-1zM16 7h1v1h-1zM20 7h1v1h-1zM23 7h1v1h-1zM29 7h1v1h-1zM34 7h1v1h-1zM37 7h1v1h-1zM2 8h1v1h-1zM5 8h1v1h-1zM7 8h1v1h-1zM9 8h1v1h-1zM13 8h1v1h-1zM16 8h1v1h-1zM20 8h1v1h-1zM23 8h1v1h-1zM29 8h1v1h-1zM34 8h1v1h-1zM37 8h1v1h-1zM2 9h1v1h-1zM5 9h1v1h-1zM8 9h1v1h-1zM13 9h1v1h-1zM16 9h5v1h-5zM23 9h1v1h-1zM27 9h6v1h-6zM34 9h1v1h-1zM37 9h1v1h-1zM2 10h1v1h-1zM4 10h1v1h-1zM7 10h1v1h-1zM9 10h1v1h-1zM13 10h1v1h-1zM16 10h1v1h-1zM20 10h1v1h-1zM23 10h1v1h-1zM29 10h1v1h-1zM34 10h1v1h-1zM37 10h1v1h-1zM2 11h1v1h-1zM6 11h1v1h-1zM10 11h1v1h-1zM13 11h1v1h-1zM23 11h1v1h-1zM29 11h1v1h-1zM37 11h1v1h-1zM1 12h1v1h-1zM3 12h1v1h-1zM13 12h11v1h-11zM29 12h4v1h-4zM37 12h1v1h-1zM0 13h1v1h-1zM4 13h8v1h-8zM13 13h1v1h-1zM23 13h1v1h-1zM26 13h3v1h-3zM35 13h3v1h-3z"/></svg>
<svg style="position:absolute;left:1344px;top:466px" width="8" height="12" viewBox="2 2 8 12" shape-rendering="crispEdges"><path fill="#FF0000" d="M5 2h1v1h-1zM4 3h1v1h-1zM2 4h8v1h-8zM2 5h1v1h-1zM9 5h1v1h-1zM2 6h1v1h-1zM9 6h1v1h-1zM2 7h8v1h-8zM2 8h1v1h-1zM9 8h1v1h-1zM2 9h1v1h-1zM9 9h1v1h-1zM2 10h8v1h-8zM2 11h1v1h-1zM9 11h1v1h-1zM2 12h1v1h-1zM9 12h1v1h-1zM2 13h8v1h-8z"/></svg>
<div class="a" style="left:1803px;top:466px;width:20px;height:190px;background:linear-gradient(90deg,#F2F2F2,#E8E8E8);border-left:1px solid #B0B0B0"></div>
<svg class="a" style="left:1807px;top:472px" width="12" height="8"><path d="M1 6.5L6 1.5L11 6.5Z" fill="#3A3A3A"/></svg>
<div class="a" style="left:1804px;top:623px;width:19px;height:21px;background:linear-gradient(90deg,#F4F4F4 45%,#D8D8D8 46%);border:1px solid #8E8E8E;border-radius:2px"></div>
<div class="a" style="left:1820px;top:292px;width:3px;height:88px;background:linear-gradient(90deg,rgba(40,40,40,.2),rgba(20,20,20,.95));-webkit-mask-image:linear-gradient(transparent,#000 12%,#000 70%,transparent)"></div>
<svg class="a" style="left:0;top:0" width="1823" height="656">
<defs><filter id="sh" x="-5%" y="-100%" width="110%" height="300%"><feGaussianBlur in="SourceAlpha" stdDeviation="2.5"/><feOffset dx="2" dy="3"/><feComponentTransfer><feFuncA type="linear" slope="0.55"/></feComponentTransfer><feMerge><feMergeNode/><feMergeNode in="SourceGraphic"/></feMerge></filter></defs>
<filter id="sh2" x="-20%" y="-50%" width="140%" height="200%"><feGaussianBlur in="SourceAlpha" stdDeviation="2"/><feOffset dx="2" dy="2"/><feComponentTransfer><feFuncA type="linear" slope="0.45"/></feComponentTransfer><feMerge><feMergeNode/><feMergeNode in="SourceGraphic"/></feMerge></filter>
<g filter="url(#sh)">
<path d="M1224 40.6L556 50.2L557 54.2L1224 44.2Z" fill="#FF0000"/>
<path d="M534 52.4L561 45L556.5 52.2L561 59Z" fill="#FF0000"/>
</g>
<rect x="1433.5" y="58.5" width="112" height="22.5" fill="none" stroke="#0000FF" stroke-width="3" filter="url(#sh2)"/>
</svg></body></html>
